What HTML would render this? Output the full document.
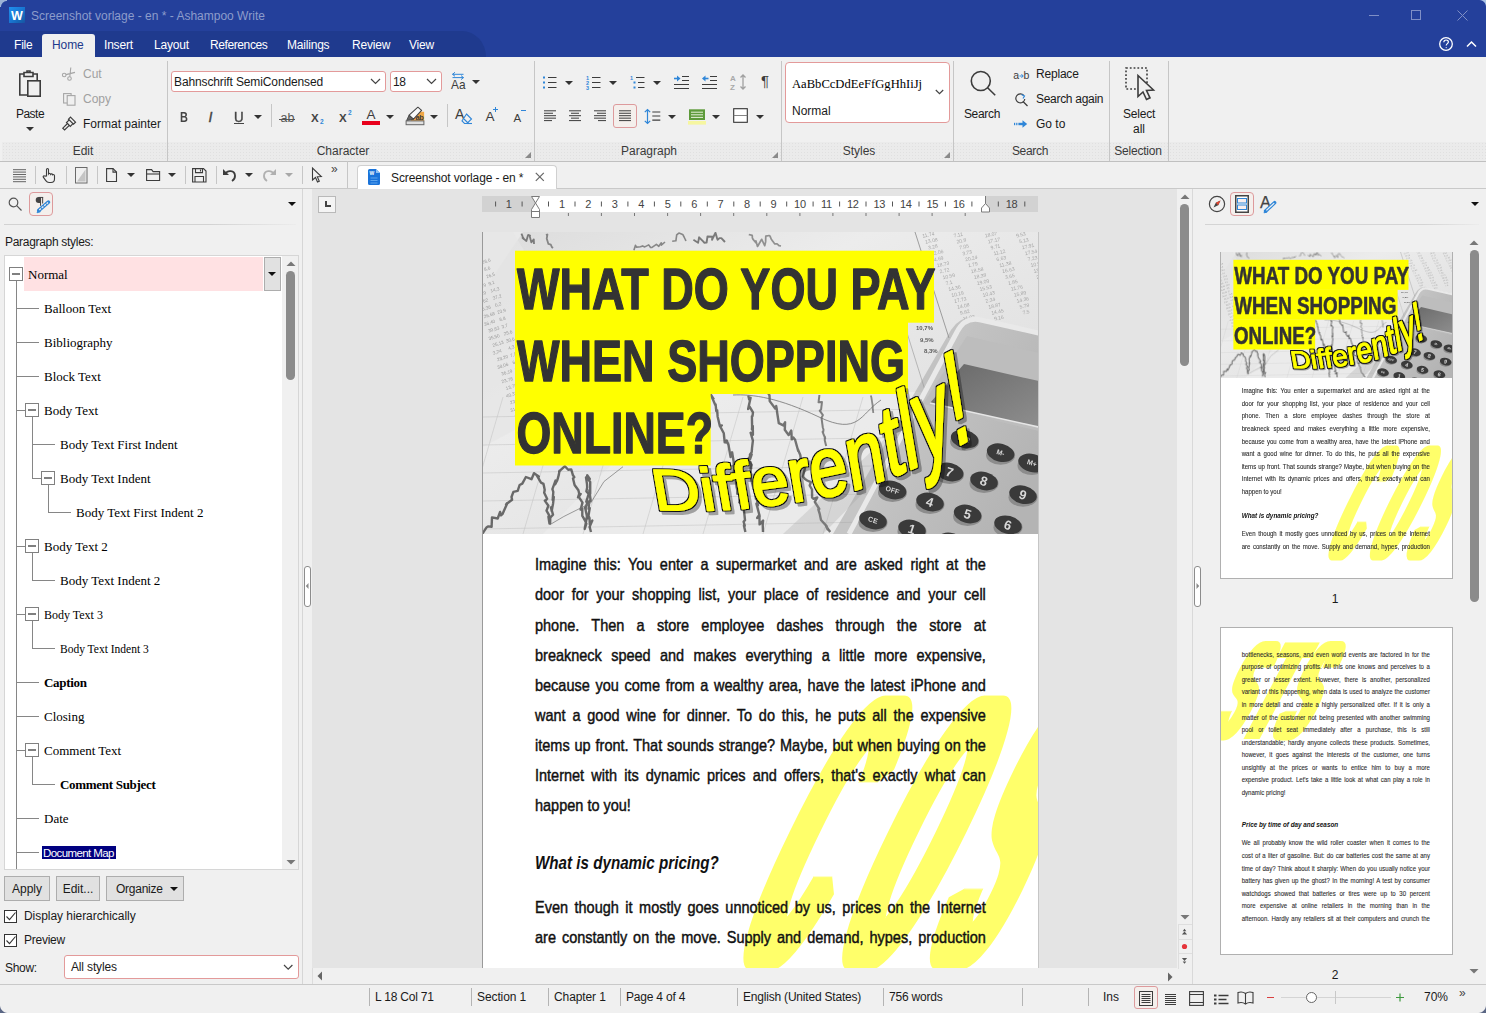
<!DOCTYPE html>
<html lang="en"><head><meta charset="utf-8"><title>Screenshot vorlage - en * - Ashampoo Write</title>
<style>
*{box-sizing:border-box;margin:0;padding:0}
html,body{width:1486px;height:1013px;overflow:hidden;background:#f0f0f0}
body{position:relative;font-family:"Liberation Sans",sans-serif;font-size:12px;color:#1a1a1a;line-height:1}
.a{position:absolute}
.t{position:absolute;white-space:pre;line-height:14px;height:14px}
.c{transform:translateX(-50%)}
svg{position:absolute;overflow:visible}
.sep{position:absolute;width:1px;background:#c6c6c6}
.gl{position:absolute;top:144px;height:14px;line-height:14px;color:#3a3a3a;white-space:pre;transform:translateX(-50%)}
.gray{color:#a0a0a0}
.arr{position:absolute;width:0;height:0;border-left:4px solid transparent;border-right:4px solid transparent;border-top:4px solid #333}
.serif{font-family:"Liberation Serif",serif}
.pinkbox{position:absolute;border:1px solid #dd9a9c;border-radius:3px;background:#f4efec}
.combo{position:absolute;border:1px solid #e39a9a;border-radius:3px;background:#fff}
.tr{position:absolute;white-space:pre;font-family:"Liberation Serif",serif;font-size:13px;line-height:16px;height:16px;color:#000}
.exp{position:absolute;width:14px;height:14px;border:1px solid #808080;background:#fff}
.exp:after{content:"";position:absolute;left:2px;top:5px;width:8px;height:2px;background:#808080}
.hl{position:absolute;height:1px;background:#868686}
.vl{position:absolute;width:1px;background:#868686}
.btn{position:absolute;height:25px;border:1px solid #adadad;background:#e1e1e1;line-height:24px;text-align:center;white-space:pre}
.sb{position:absolute;top:990px;line-height:14px;white-space:pre;color:#1a1a1a}
.ssep{position:absolute;top:988px;width:1px;height:18px;background:#b4b4b4}
</style></head><body>

<!-- TITLE BAR + MENU -->
<div class="a" style="left:0;top:0;width:1486px;height:57px;background:#24409b"></div>
<div class="a" style="left:0;top:31px;width:486px;height:26px;background:#1f3a8e;border-top-right-radius:24px 26px"></div>
<div class="a" style="left:9px;top:7px;width:16px;height:16px;background:linear-gradient(135deg,#2190ee 0%,#1976d2 50%,#1560ae 85%,#1c4fa2 100%)"></div>
<div class="a" style="left:7px;top:6px;width:4px;height:18px;background:#3f8fe6;opacity:.0"></div>
<div class="t" style="left:9px;top:7.5px;width:16px;text-align:center;color:#fff;font-weight:bold;font-size:12.5px;line-height:16px;height:16px">W</div>
<div class="t" style="left:31px;top:9px;color:#8c9ccb;font-size:12px">Screenshot vorlage - en * - Ashampoo Write</div>
<svg style="left:1360px;top:0" width="126" height="32" viewBox="0 0 126 32" fill="none" stroke="#7f8fc6" stroke-width="1">
<path d="M9 15.5h10"/><rect x="51.5" y="10.5" width="9" height="9"/><path d="M97.5 10.5l10 10M107.5 10.5l-10 10"/></svg>
<div class="a" style="left:42px;top:34px;width:53px;height:23px;background:#f0f0f0;border-radius:3px 3px 0 0"></div>
<div class="t" style="left:14px;top:38px;color:#fff;letter-spacing:-.2px">File</div>
<div class="t" style="left:52px;top:38px;color:#1e3a8c;letter-spacing:-.1px">Home</div>
<div class="t" style="left:104px;top:38px;color:#fff;letter-spacing:-.2px">Insert</div>
<div class="t" style="left:154px;top:38px;color:#fff;letter-spacing:-.2px">Layout</div>
<div class="t" style="left:210px;top:38px;color:#fff;letter-spacing:-.4px">References</div>
<div class="t" style="left:287px;top:38px;color:#fff;letter-spacing:-.2px">Mailings</div>
<div class="t" style="left:352px;top:38px;color:#fff;letter-spacing:-.2px">Review</div>
<div class="t" style="left:409px;top:38px;color:#fff;letter-spacing:-.2px">View</div>
<svg style="left:1438px;top:36px" width="44" height="16" viewBox="0 0 44 16" fill="none" stroke="#fff" stroke-width="1.3">
<circle cx="8" cy="8" r="6.3"/><path d="M5.8 6.3c0-3 4.6-3 4.6-.3 0 1.6-2.2 1.7-2.2 3.5" stroke-width="1.2"/><circle cx="8.2" cy="11.6" r=".6" fill="#fff" stroke="none"/>
<path d="M29 10.5l4.5-4.5 4.5 4.5" stroke-width="1.5"/></svg>

<!-- RIBBON -->
<div class="a" style="left:0;top:57px;width:1486px;height:104px;background:#f0f0f0"></div>
<div class="a" style="left:2px;top:142px;width:1484px;height:19px;background:#ebebeb;background-image:radial-gradient(#e0e0e0 0.6px,transparent 0.7px);background-size:3px 3px"></div>
<div class="a" style="left:0;top:161px;width:1486px;height:1px;background:#c0c0c0"></div>
<div class="sep" style="left:167px;top:61px;height:100px"></div>
<div class="sep" style="left:534px;top:61px;height:100px"></div>
<div class="sep" style="left:781px;top:61px;height:100px"></div>
<div class="sep" style="left:953px;top:61px;height:100px"></div>
<div class="sep" style="left:1109px;top:61px;height:100px"></div>
<div class="sep" style="left:1168px;top:61px;height:100px"></div>
<div class="gl" style="left:83px">Edit</div>
<div class="gl" style="left:343px">Character</div>
<div class="gl" style="left:649px">Paragraph</div>
<div class="gl" style="left:859px">Styles</div>
<div class="gl" style="left:1030px;letter-spacing:-.3px">Search</div>
<div class="gl" style="left:1138px;letter-spacing:-.2px">Selection</div>
<svg style="left:524px;top:151px" width="8" height="8"><path d="M7 1v6H1z" fill="#8a8a8a"/></svg>
<svg style="left:771px;top:151px" width="8" height="8"><path d="M7 1v6H1z" fill="#8a8a8a"/></svg>
<svg style="left:943px;top:151px" width="8" height="8"><path d="M7 1v6H1z" fill="#8a8a8a"/></svg>

<!-- Edit group -->
<svg style="left:17px;top:69px" width="26" height="30" viewBox="0 0 26 30" fill="none" stroke="#3c3c3c" stroke-width="1.6">
<path d="M7 5H2.8v21H10"/><path d="M16 5h4.2v6"/><path d="M7 3.5h9v4H7z" fill="#f0f0f0"/><path d="M10 3.5V2h3v1.5"/><rect x="10.8" y="11.8" width="12.4" height="15.4" fill="#f0f0f0"/></svg>
<div class="t c" style="left:30px;top:107px;letter-spacing:-.5px">Paste</div>
<div class="arr" style="left:26px;top:127px;border-top-color:#333"></div>
<svg style="left:61px;top:66px" width="16" height="16" viewBox="0 0 16 16" fill="none" stroke="#a6a6a6" stroke-width="1.1">
<circle cx="3.2" cy="9" r="1.8"/><circle cx="8.5" cy="12.5" r="1.8"/><path d="M5 8.6l9-2.2M8.8 10.7L9.8 1.5"/></svg>
<div class="t gray" style="left:83px;top:67px">Cut</div>
<svg style="left:63px;top:92.5px" width="13" height="13" viewBox="0 0 13 13" fill="#f0f0f0" stroke="#a6a6a6" stroke-width="1.1"><rect x=".6" y=".6" width="7.5" height="9.4"/><rect x="4.2" y="2.6" width="7.8" height="9.6"/></svg>
<div class="t gray" style="left:83px;top:92px">Copy</div>
<svg style="left:61px;top:115px" width="17" height="17" viewBox="0 0 17 17" fill="none" stroke="#3c3c3c" stroke-width="1.2">
<path d="M9.5 2.2l5 5-2 2-5-5z"/><path d="M8.2 4.8L5.5 7.5l3.8 3.8 2.7-2.7"/><path d="M6.5 8.5L1.8 13.2l1.8 1.8 4.7-4.7"/></svg>
<div class="t" style="left:83px;top:117px">Format painter</div>

<!-- Character group -->
<div class="combo" style="left:171px;top:71px;width:215px;height:21px"></div>
<div class="t" style="left:174px;top:75px;letter-spacing:-.12px">Bahnschrift SemiCondensed</div>
<svg style="left:370px;top:78px" width="12" height="8" fill="none" stroke="#444" stroke-width="1.2"><path d="M1 1l4.5 4.5L10 1"/></svg>
<div class="combo" style="left:390px;top:71px;width:52px;height:21px"></div>
<div class="t" style="left:393px;top:75px;letter-spacing:-.5px">18</div>
<svg style="left:426px;top:78px" width="12" height="8" fill="none" stroke="#444" stroke-width="1.2"><path d="M1 1l4.5 4.5L10 1"/></svg>
<svg style="left:450px;top:70px" width="20" height="24" viewBox="0 0 20 24" fill="none">
<path d="M2.5 4.3h11M2.5 4.3l2.5-2M2.5 4.3l2.5 2M13.5 7.6h-11M13.5 7.6l-2.5-2M13.5 7.6l-2.5 2" stroke="#2f86d8" stroke-width="1"/>
<text x="1" y="19" textLength="14.5" lengthAdjust="spacingAndGlyphs" font-family="Liberation Sans,sans-serif" font-size="12.8" fill="#3c3c3c" stroke="none">Aa</text></svg>
<div class="arr" style="left:472px;top:80px;border-top-color:#333"></div>
<div class="t" style="left:179.5px;top:109.3px;font-weight:bold;font-size:14px;color:#444;line-height:16px;height:16px;transform:scaleX(.78);transform-origin:0 0">B</div>
<div class="t" style="left:208.5px;top:109.3px;font-style:italic;font-size:14px;color:#444;line-height:16px;height:16px;-webkit-text-stroke:.4px #444">I</div>
<div class="t" style="left:234px;top:109.3px;font-size:14px;color:#444;line-height:16px;height:16px;-webkit-text-stroke:.4px #444;transform:scaleX(.95);transform-origin:0 0">U</div>
<div class="a" style="left:234px;top:123px;width:10px;height:1px;background:#444"></div>
<div class="arr" style="left:254px;top:115px;border-top-color:#333"></div>
<div class="sep" style="left:271px;top:104px;height:23px"></div>
<div class="t" style="left:280.5px;top:110.5px;font-size:12.5px;color:#555">ab</div><div class="a" style="left:279px;top:118.5px;width:16px;height:1px;background:#555"></div>
<div class="t" style="left:311px;top:110.2px;font-size:11.5px;color:#444;line-height:16px;height:16px;font-weight:bold">X</div>
<div class="t" style="left:320px;top:117.5px;font-size:6.5px;color:#2f86d8;line-height:8px;height:8px;font-weight:bold">2</div>
<div class="t" style="left:339px;top:110px;font-size:11.5px;color:#444;line-height:16px;height:16px;font-weight:bold">X</div>
<div class="t" style="left:348px;top:108.5px;font-size:6.5px;color:#2f86d8;line-height:8px;height:8px;font-weight:bold">2</div>
<div class="t" style="left:366.5px;top:106.5px;font-size:13.5px;color:#3c3c3c;line-height:16px;height:16px">A</div>
<div class="a" style="left:362px;top:121px;width:18px;height:4px;background:#e8001c"></div>
<div class="arr" style="left:386px;top:115px;border-top-color:#333"></div>
<svg style="left:405px;top:105px" width="20" height="22" viewBox="0 0 20 22" fill="none">
<path d="M9.5 6.8h9.6v9.2H5.5z" fill="#f0a646"/>
<text x="10.4" y="15.4" font-family="Liberation Sans,sans-serif" font-size="7.5" fill="#3a3a3a" font-weight="bold" letter-spacing="-.3">ab</text>
<path d="M4.1 10.1L8.5 14.2 1.6 15.6z" fill="#666" stroke="#444" stroke-width=".9" stroke-linejoin="round"/>
<path d="M12.9 2.2L16.6 5.4 8.5 14.2 4.1 10.1z" fill="#fafafa" stroke="#444" stroke-width="1.1" stroke-linejoin="round"/>
<rect x="1.1" y="15.9" width="17.8" height="3.8" fill="#e0e0e0" stroke="#666" stroke-width="1"/></svg>
<div class="arr" style="left:430px;top:115px;border-top-color:#333"></div>
<div class="sep" style="left:447px;top:104px;height:23px"></div>
<div class="t" style="left:455px;top:106px;font-size:14px;color:#3c3c3c;line-height:16px;height:16px">A</div>
<svg style="left:460px;top:112px" width="14" height="14" viewBox="0 0 14 14" fill="#f0f0f0" stroke="#2f86d8" stroke-width="1.1"><path d="M6.5 2l5 5-4.5 4.5H4.5L2 9z"/><path d="M4 7l4.5 4.5" /><path d="M7 11.5h5"/></svg>
<div class="t" style="left:485.5px;top:109px;font-size:13.5px;color:#3c3c3c;line-height:16px;height:16px">A</div>
<svg style="left:493px;top:107px" width="6" height="6" stroke="#2f86d8" stroke-width="1"><path d="M0 2.5h5M2.5 0v5"/></svg>
<div class="t" style="left:513.5px;top:110px;font-size:11.5px;color:#3c3c3c;line-height:16px;height:16px">A</div>
<svg style="left:521px;top:107px" width="6" height="6" stroke="#2f86d8" stroke-width="1"><path d="M0 3.5h5"/></svg>

<!-- Paragraph group row 1 -->
<svg style="left:543px;top:75.7px" width="14" height="14" stroke-width="1.2"><path d="M5 1.5h8.5M5 6.5h8.5M5 11.5h8.5" stroke="#3c3c3c"/><path d="M0 1.5h2M0 6.5h2M0 11.5h2" stroke="#2f86d8" stroke-width="1.8"/></svg>
<div class="arr" style="left:565px;top:81px;border-top-color:#333"></div>
<svg style="left:586px;top:73.7px" width="16" height="18" stroke-width="1.2"><path d="M6 3.5h8.5M6 8.5h8.5M6 13.5h8.5" stroke="#3c3c3c"/>
<text x="0" y="5.5" font-size="5.5" font-weight="bold" font-family="Liberation Sans,sans-serif" fill="#2f86d8">1</text><text x="0" y="10.5" font-size="5.5" font-weight="bold" font-family="Liberation Sans,sans-serif" fill="#2f86d8">2</text><text x="0" y="15.5" font-size="5.5" font-weight="bold" font-family="Liberation Sans,sans-serif" fill="#2f86d8">3</text></svg>
<div class="arr" style="left:609px;top:81px;border-top-color:#333"></div>
<svg style="left:630px;top:73.7px" width="16" height="18" stroke-width="1.2"><path d="M6 3.5h8.5M8 8.5h6.5M8 13.5h6.5" stroke="#3c3c3c"/>
<text x="0" y="5.5" font-size="5.5" font-weight="bold" font-family="Liberation Sans,sans-serif" fill="#2f86d8">1</text><path d="M3.5 8.5h2M3.5 13.5h2" stroke="#2f86d8" stroke-width="1.8"/></svg>
<div class="arr" style="left:653px;top:81px;border-top-color:#333"></div>
<svg style="left:674px;top:74px" width="16" height="17" stroke="#3c3c3c" stroke-width="1.2"><path d="M8 2.5h7M8 6.5h7M0 10.5h15M0 14.5h15"/><path d="M0 4.5h4" stroke="#2f86d8" stroke-width="1.6" fill="none"/><path d="M3 1.5l3.5 3-3.5 3z" fill="#2f86d8" stroke="none"/></svg>
<svg style="left:702px;top:74px" width="16" height="17" stroke="#3c3c3c" stroke-width="1.2"><path d="M8 2.5h7M8 6.5h7M0 10.5h15M0 14.5h15"/><path d="M2.5 4.5h4" stroke="#2f86d8" stroke-width="1.6" fill="none"/><path d="M3.5 1.5L0 4.5l3.5 3z" fill="#2f86d8" stroke="none"/></svg>
<svg style="left:730px;top:73px" width="18" height="18" fill="none" stroke="#a0a0a0" stroke-width="1.3"><path d="M13 2v14M10.5 4.5L13 2l2.5 2.5M10.5 13.5L13 16l2.5-2.5"/>
<text x="0" y="8" font-size="8" font-weight="bold" font-family="Liberation Sans,sans-serif" fill="#a8a8a8" stroke="none">A</text><text x="0" y="17" font-size="8" font-weight="bold" font-family="Liberation Sans,sans-serif" fill="#a8a8a8" stroke="none">Z</text></svg>
<div class="t" style="left:761px;top:73px;font-size:15px;color:#3c3c3c;line-height:16px;height:16px">¶</div>
<!-- row 2 -->
<div class="pinkbox" style="left:613px;top:104px;width:24px;height:24px"></div>
<svg style="left:544px;top:110px" width="14" height="14" stroke="#3c3c3c" stroke-width="1"><path d="M0 0.8h12"/><path d="M0 3.25h9"/><path d="M0 5.7h12"/><path d="M0 8.15h12"/><path d="M0 10.6h8"/></svg><svg style="left:569px;top:110px" width="14" height="14" stroke="#3c3c3c" stroke-width="1"><path d="M0 0.8h12"/><path d="M2 3.25h8"/><path d="M0 5.7h12"/><path d="M2 8.15h8"/><path d="M0 10.6h12"/></svg><svg style="left:594px;top:110px" width="14" height="14" stroke="#3c3c3c" stroke-width="1"><path d="M0 0.8h12"/><path d="M3 3.25h9"/><path d="M0 5.7h12"/><path d="M0 8.15h12"/><path d="M4 10.6h8"/></svg><svg style="left:619.3px;top:110px" width="14" height="14" stroke="#3c3c3c" stroke-width="1"><path d="M0 0.8h12"/><path d="M0 3.25h12"/><path d="M0 5.7h12"/><path d="M0 8.15h12"/><path d="M0 10.6h12"/></svg>
<svg style="left:644px;top:108px" width="18" height="17" fill="none" stroke-width="1.2"><path d="M3.5 1.5v14M.8 4.2L3.5 1.5l2.7 2.7M.8 12.8l2.7 2.7 2.7-2.7" stroke="#2f86d8"/><path d="M8.3 4h8M8.3 8h8M8.3 12.2h8" stroke="#3c3c3c"/></svg>
<div class="arr" style="left:668px;top:115px;border-top-color:#333"></div>
<svg style="left:688px;top:109px" width="18" height="20"><rect x="0" y="12" width="18" height="3.6" fill="#f6f6a0"/><rect x="1" y=".3" width="16" height="10.7" fill="#5d9a3a"/><path d="M3 3.2h12M3 5.8h12M3 8.4h12" stroke="#e6f0da" stroke-width="1"/></svg>
<div class="arr" style="left:712px;top:115px;border-top-color:#333"></div>
<svg style="left:733px;top:108px" width="16" height="16" fill="#fff" stroke="#333" stroke-width="1.1"><rect x=".7" y=".7" width="13.6" height="13.6"/><path d="M.7 7.5h13.6" stroke="#777" stroke-width=".9"/></svg>
<div class="arr" style="left:756px;top:115px;border-top-color:#333"></div>

<!-- Styles -->
<div class="combo" style="left:785px;top:62px;width:165px;height:61px;border-radius:4px"></div>
<div class="t serif" style="left:792px;top:76px;font-size:12.6px;line-height:16px;height:16px;color:#000">AaBbCcDdEeFfGgHhIiJj</div>
<div class="t" style="left:792px;top:104px">Normal</div>
<svg style="left:935px;top:89px" width="10" height="7" fill="none" stroke="#444" stroke-width="1.2"><path d="M.8 1l3.7 3.7L8.2 1"/></svg>

<!-- Search -->
<svg style="left:969px;top:68px" width="28" height="28" fill="none" stroke="#3c3c3c" stroke-width="1.6"><circle cx="11.8" cy="13" r="9.5"/><path d="M18.6 19.8l7.6 7.4"/></svg>
<div class="t c" style="left:982px;top:107px;letter-spacing:-.3px">Search</div>
<div class="t" style="left:1013.3px;top:68px;font-size:10.5px;color:#3c3c3c">a</div><div class="t" style="left:1023.6px;top:68px;font-size:10.5px;color:#3c3c3c">b</div>
<svg style="left:1019px;top:72.5px" width="6" height="6" fill="none" stroke="#2f86d8" stroke-width="1"><path d="M.5 3h3.5M2.5 1.2L4.3 3 2.5 4.8"/></svg>
<div class="t" style="left:1036px;top:67px;letter-spacing:-.2px">Replace</div>
<svg style="left:1014px;top:92px" width="15" height="15" fill="none" stroke="#3c3c3c" stroke-width="1.2"><path d="M9.8 3.5A4.5 4.5 0 1 0 10.8 7"/><path d="M9 9.5l4.5 4.5"/><path d="M7.5 2.5l3 1.5-1.5 2.5" stroke="#2f86d8"/></svg>
<div class="t" style="left:1036px;top:92px;letter-spacing:-.3px">Search again</div>
<svg style="left:1014px;top:119px" width="16" height="10" fill="#2f86d8"><rect x="0" y="3.8" width="1.2" height="2.4"/><rect x="2.2" y="3.8" width="1.2" height="2.4"/><rect x="4.4" y="3.8" width="5" height="2.4"/><path d="M8.5 1.2L13.2 5 8.5 8.8z"/></svg>
<div class="t" style="left:1036px;top:117px">Go to</div>

<!-- Selection -->
<svg style="left:1125px;top:67px" width="30" height="34" fill="none"><path d="M1 1h21v21H1z" stroke="#3c3c3c" stroke-width="1.6" stroke-dasharray="1.8 2"/><path d="M13 8.5v21l5-4.5 3.5 7.5 3.5-1.7-3.5-7.3 7-.5z" fill="#f0f0f0" stroke="#3c3c3c" stroke-width="1.6" stroke-linejoin="miter"/></svg>
<div class="t c" style="left:1139px;top:107px;letter-spacing:-.2px">Select</div>
<div class="t c" style="left:1139px;top:122px">all</div>

<!-- TOOLBAR ROW -->
<div class="a" style="left:0;top:162px;width:1486px;height:26px;background:#f0f0f0"></div>
<div class="a" style="left:0;top:188px;width:1486px;height:1px;background:#c9c9c9"></div>
<svg style="left:12.5px;top:169px" width="14" height="14" stroke="#555" stroke-width=".9"><path d="M0 .7h13M0 3.1h13M0 5.5h13M0 7.9h13M0 10.3h13M0 12.7h13"/></svg>
<div class="sep" style="left:35px;top:166px;height:18px"></div>
<svg style="left:42px;top:167px" width="15" height="17" fill="#f0f0f0" stroke="#3c3c3c" stroke-width="1.1"><path d="M4.5 9V2.5c0-1.3 2-1.3 2 0V7c.6-.9 2-.7 2.1.3.6-.7 1.9-.5 2 .5.7-.5 1.9-.2 1.9.9v3.3c0 2.5-1.3 3.5-3.5 3.5H7c-1.5 0-2.3-.6-3.2-1.9L1.3 10.2c-.6-1 .7-2 1.6-1.1z"/></svg>
<div class="sep" style="left:66px;top:166px;height:18px"></div>
<svg style="left:75px;top:167px" width="13" height="17" fill="none" stroke="#6a6a6a" stroke-width="1"><rect x=".5" y=".5" width="11.5" height="15.5"/><path d="M10.5 2.5v12h-8.5z" fill="#c4c4c4" stroke="none"/></svg>
<div class="sep" style="left:97px;top:166px;height:18px"></div>
<svg style="left:106px;top:168px" width="12" height="15" fill="none" stroke="#3c3c3c" stroke-width="1.1"><path d="M.6.6h6.4l3.5 3.5v9.4H.6z"/><path d="M7 .6v3.5h3.5"/></svg>
<div class="arr" style="left:127px;top:173px;border-top-color:#333"></div>
<svg style="left:146px;top:169px" width="15" height="13" fill="none" stroke="#3c3c3c" stroke-width="1.1"><path d="M.6 11.5V.6h5l1.5 2h6.5v8.9z"/><path d="M.6 5h13"/></svg>
<div class="arr" style="left:168px;top:173px;border-top-color:#333"></div>
<div class="sep" style="left:185px;top:166px;height:18px"></div>
<svg style="left:192px;top:168px" width="15" height="15" fill="none" stroke="#3c3c3c" stroke-width="1.1"><path d="M.6.6h10.9l2.5 2.5v10.9H.6z"/><path d="M3.5.6v4h7V.6M8.5 1.5v2M3 14V8.5h8.5V14"/></svg>
<div class="sep" style="left:216px;top:166px;height:18px"></div>
<svg style="left:222px;top:168px" width="15" height="14" fill="none" stroke="#3c3c3c" stroke-width="1.8"><path d="M3.5 5.5c2-3.5 9-3.5 9.5 2 .3 3-1.5 4.5-3 5.5"/><path d="M1 1v6h6z" fill="#3c3c3c" stroke="none"/></svg>
<div class="arr" style="left:245px;top:173px;border-top-color:#333"></div>
<svg style="left:262px;top:168px" width="15" height="14" fill="none" stroke="#b0b0b0" stroke-width="1.8"><path d="M11.5 5.5c-2-3.5-9-3.5-9.5 2-.3 3 1.5 4.5 3 5.5"/><path d="M14 1v6H8z" fill="#b0b0b0" stroke="none"/></svg>
<div class="arr" style="left:285px;top:173px;border-top-color:#a8a8a8"></div>
<div class="sep" style="left:302px;top:166px;height:18px"></div>
<svg style="left:311px;top:167px" width="12" height="16" fill="none" stroke="#3c3c3c" stroke-width="1.1"><path d="M1.5 1v12l3-2.5 2 4.5 1.8-.8-2-4.5 4-.2z"/></svg>
<div class="t" style="left:331px;top:162px;font-size:12px;color:#444">»</div>
<div class="sep" style="left:347px;top:161px;height:27px"></div>
<!-- doc tab -->
<div class="a" style="left:357px;top:165px;width:200px;height:24px;background:#fff;border:1px solid #d0d0d0;border-bottom:none;border-radius:4px 4px 0 0"></div>
<svg style="left:368px;top:169px" width="12" height="16"><path d="M1.5 0h6.5l4 4v10.5a1.5 1.5 0 0 1-1.5 1.5h-9A1.5 1.5 0 0 1 0 14.5v-13A1.5 1.5 0 0 1 1.5 0z" fill="#1a73d9"/><path d="M8 0v4h4z" fill="#8cc0f5"/><path d="M2.5 9h7M2.5 11.5h7M2.5 14h7" stroke="#5fa6ee" stroke-width="1"/><text x="1.5" y="5.8" font-family="Liberation Sans,sans-serif" font-size="5" font-weight="bold" fill="#fff">W</text></svg>
<div class="t" style="left:391px;top:171px;letter-spacing:-.12px">Screenshot vorlage - en *</div>
<svg style="left:535px;top:172px" width="10" height="10" stroke="#666" stroke-width="1.2"><path d="M.8.8l8 8M8.8.8l-8 8"/></svg>

<!-- LEFT PANEL -->
<div class="a" style="left:0;top:189px;width:303px;height:796px;background:#f0f0f0"></div>
<svg style="left:8px;top:197px" width="15" height="15" fill="none" stroke="#555" stroke-width="1.2"><circle cx="5.5" cy="5.5" r="4.3"/><path d="M8.7 8.7l4.8 4.8"/></svg>
<div class="pinkbox" style="left:29px;top:192px;width:24px;height:24px;border-radius:4px"></div>
<svg style="left:29px;top:192px" width="24" height="24" fill="none"><path d="M11.9 5H9.7a3 3 0 0 0 0 6h2.2z" fill="#444"/><path d="M9.7 5.45h4.4M11.55 5v8.8M13.65 5v6.5" stroke="#444" stroke-width="1"/><path d="M9.8 18.3L19.4 10.2" stroke="#2f86d8" stroke-width="3.7" stroke-linecap="round"/><path d="M8 20.8l1.2-3.3 2.2 2.3z" fill="#2f86d8" stroke="#2f86d8" stroke-width=".8" stroke-linejoin="round"/><path d="M10.3 17.9L19 10.5" stroke="#f4efec" stroke-width="1.3" stroke-dasharray="2.2 1"/></svg>
<div class="arr" style="left:288px;top:202px;border-top-color:#111"></div>
<div class="a" style="left:4px;top:224px;width:292px;height:1px;background:linear-gradient(90deg,#d2d2d2 70%,#ececec)"></div>
<div class="t" style="left:5px;top:235px;letter-spacing:-.3px">Paragraph styles:</div>
<div class="a" style="left:4px;top:255px;width:295px;height:615px;background:#fff;border:1px solid #d6d6d6"></div>
<div class="a" style="left:282px;top:256px;width:16px;height:613px;background:#f0f0f0"></div>
<div class="a" style="left:24px;top:257px;width:239px;height:34px;background:#ffe1e3"></div>
<div class="a" style="left:264px;top:257px;width:17px;height:34px;background:#e1e1e1;border:1px solid #adadad"></div>
<div class="arr" style="left:268px;top:272px;border-top-color:#111"></div>
<svg style="left:286px;top:261px" width="10" height="6"><path d="M5 .5l4.5 4.5h-9z" fill="#777"/></svg>
<div class="a" style="left:286px;top:271px;width:9px;height:109px;background:#8b8b8b;border-radius:4.5px"></div>
<svg style="left:286px;top:859px" width="10" height="6"><path d="M5 5.5L.5 1h9z" fill="#777"/></svg>
<div class="vl" style="left:16px;top:281px;height:588px"></div><div class="vl" style="left:32px;top:416px;height:63px"></div><div class="vl" style="left:48px;top:484px;height:29px"></div><div class="vl" style="left:32px;top:552px;height:29px"></div><div class="vl" style="left:32px;top:620px;height:29px"></div><div class="vl" style="left:32px;top:756px;height:29px"></div><div class="exp" style="left:9px;top:267px"></div><div class="tr" style="left:28px;top:266.5px;font-size:13px">Normal</div><div class="hl" style="left:16px;top:308px;width:23px"></div><div class="tr" style="left:44px;top:300.5px;font-size:13px">Balloon Text</div><div class="hl" style="left:16px;top:342px;width:23px"></div><div class="tr" style="left:44px;top:334.5px;font-size:13px">Bibliography</div><div class="hl" style="left:16px;top:376px;width:23px"></div><div class="tr" style="left:44px;top:368.5px;font-size:13px">Block Text</div><div class="hl" style="left:16px;top:410px;width:12px"></div><div class="exp" style="left:25px;top:403px"></div><div class="tr" style="left:44px;top:402.5px;font-size:13px">Body Text</div><div class="hl" style="left:32px;top:444px;width:23px"></div><div class="tr" style="left:60px;top:436.5px;font-size:13px">Body Text First Indent</div><div class="hl" style="left:32px;top:478px;width:12px"></div><div class="exp" style="left:41px;top:471px"></div><div class="tr" style="left:60px;top:470.5px;font-size:13px">Body Text Indent</div><div class="hl" style="left:48px;top:512px;width:23px"></div><div class="tr" style="left:76px;top:504.5px;font-size:13px">Body Text First Indent 2</div><div class="hl" style="left:16px;top:546px;width:12px"></div><div class="exp" style="left:25px;top:539px"></div><div class="tr" style="left:44px;top:538.5px;font-size:13px">Body Text 2</div><div class="hl" style="left:32px;top:580px;width:23px"></div><div class="tr" style="left:60px;top:572.5px;font-size:13px">Body Text Indent 2</div><div class="hl" style="left:16px;top:614px;width:12px"></div><div class="exp" style="left:25px;top:607px"></div><div class="tr" style="left:44px;top:606.5px;font-size:12px">Body Text 3</div><div class="hl" style="left:32px;top:648px;width:23px"></div><div class="tr" style="left:60px;top:640.5px;font-size:11.5px">Body Text Indent 3</div><div class="hl" style="left:16px;top:682px;width:23px"></div><div class="tr" style="left:44px;top:674.5px;font-size:13px;font-weight:bold;letter-spacing:-.3px">Caption</div><div class="hl" style="left:16px;top:716px;width:23px"></div><div class="tr" style="left:44px;top:708.5px;font-size:13px">Closing</div><div class="hl" style="left:16px;top:750px;width:12px"></div><div class="exp" style="left:25px;top:743px"></div><div class="tr" style="left:44px;top:742.5px;font-size:13px">Comment Text</div><div class="hl" style="left:32px;top:784px;width:23px"></div><div class="tr" style="left:60px;top:776.5px;font-size:13px;font-weight:bold;letter-spacing:-.3px">Comment Subject</div><div class="hl" style="left:16px;top:818px;width:23px"></div><div class="tr" style="left:44px;top:810.5px;font-size:13px">Date</div><div class="hl" style="left:16px;top:852px;width:23px"></div><div class="a" style="left:42px;top:846px;width:74px;height:13px;background:#000080"></div><div class="t" style="left:43px;top:845.5px;color:#fff;font-size:11.5px;letter-spacing:-.6px">Document Map</div>
<div class="btn" style="left:4px;top:876px;width:46px">Apply</div>
<div class="btn" style="left:56px;top:876px;width:44px">Edit...</div>
<div class="btn" style="left:106px;top:876px;width:78px;text-align:left;padding-left:9px;letter-spacing:-.25px">Organize</div>
<div class="arr" style="left:170px;top:887px;border-top-color:#111"></div>
<div class="a" style="left:4px;top:910px;width:13px;height:13px;background:#fff;border:1px solid #333"></div>
<svg style="left:5px;top:911px" width="12" height="11" fill="none" stroke="#333" stroke-width="1.1"><path d="M1.5 5.5l3 3.2L10.5 1.5"/></svg>
<div class="t" style="left:24px;top:909px;letter-spacing:-.05px">Display hierarchically</div>
<div class="a" style="left:4px;top:934px;width:13px;height:13px;background:#fff;border:1px solid #333"></div>
<svg style="left:5px;top:935px" width="12" height="11" fill="none" stroke="#333" stroke-width="1.1"><path d="M1.5 5.5l3 3.2L10.5 1.5"/></svg>
<div class="t" style="left:24px;top:933px;letter-spacing:-.25px">Preview</div>
<div class="t" style="left:5px;top:961px;letter-spacing:-.3px">Show:</div>
<div class="combo" style="left:64px;top:955px;width:235px;height:24px"></div>
<div class="t" style="left:71px;top:960px;letter-spacing:-.15px">All styles</div>
<svg style="left:283px;top:964px" width="11" height="8" fill="none" stroke="#444" stroke-width="1.2"><path d="M1 1l4.2 4.2L9.4 1"/></svg>
<div class="a" style="left:0;top:984px;width:1486px;height:1px;background:#c9c9c9"></div>

<!-- left splitter -->
<div class="a" style="left:302px;top:189px;width:1px;height:795px;background:#d6d6d6"></div>
<div class="a" style="left:303px;top:189px;width:9px;height:795px;background:#f0f0f0"></div>
<div class="a" style="left:304px;top:566px;width:7px;height:41px;background:#fff;border:1px solid #8c8c8c;border-radius:3px"></div>
<svg style="left:305px;top:582px" width="4" height="8"><path d="M3.5 1v6L.8 4z" fill="#888"/></svg>

<!-- DOC AREA -->
<div class="a" style="left:312px;top:189px;width:865px;height:779px;background:#e4e4e4"></div>
<div class="a" style="left:312px;top:968px;width:1px;height:16px;background:#dcdcdc"></div>
<div class="a" style="left:318px;top:195.5px;width:17.5px;height:17px;background:#f4f4f4;border:1px solid #b9b9b9"></div>
<div class="a" style="left:325px;top:201px;width:2px;height:6px;background:#444"></div><div class="a" style="left:325px;top:205px;width:6px;height:2px;background:#444"></div>
<div class="a" style="left:482px;top:196px;width:556px;height:16px;background:#d2d2d2"></div><div class="a" style="left:535px;top:196px;width:451px;height:16px;background:#fff"></div><svg style="left:0;top:0" width="1486" height="230" font-family="Liberation Sans,sans-serif" font-size="11" fill="#444" text-anchor="middle"><text x="508.8" y="208">1</text><text x="561.8" y="208" letter-spacing="-.3">1</text><text x="588.2" y="208" letter-spacing="-.3">2</text><text x="614.7" y="208" letter-spacing="-.3">3</text><text x="641.1" y="208" letter-spacing="-.3">4</text><text x="667.6" y="208" letter-spacing="-.3">5</text><text x="694.1" y="208" letter-spacing="-.3">6</text><text x="720.5" y="208" letter-spacing="-.3">7</text><text x="747" y="208" letter-spacing="-.3">8</text><text x="773.4" y="208" letter-spacing="-.3">9</text><text x="799.9" y="208" letter-spacing="-.3">10</text><text x="826.4" y="208" letter-spacing="-.3">11</text><text x="852.8" y="208" letter-spacing="-.3">12</text><text x="879.3" y="208" letter-spacing="-.3">13</text><text x="905.7" y="208" letter-spacing="-.3">14</text><text x="932.2" y="208" letter-spacing="-.3">15</text><text x="958.7" y="208" letter-spacing="-.3">16</text><text x="1011.6" y="208" letter-spacing="-.3">18</text><path d="M495.6 201.5v5M522.1 201.5v5M548.5 201.5v5M575 201.5v5M601.4 201.5v5M627.9 201.5v5M654.4 201.5v5M680.8 201.5v5M707.3 201.5v5M733.8 201.5v5M760.2 201.5v5M786.7 201.5v5M813.1 201.5v5M839.6 201.5v5M866 201.5v5M892.5 201.5v5M919 201.5v5M945.4 201.5v5M971.9 201.5v5M998.3 201.5v5M1024.8 201.5v5" stroke="#555" stroke-width="1" fill="none"/><path d="M568.4 213v3M601.4 213v3M634.5 213v3M667.6 213v3M700.6 213v3M733.7 213v3M766.8 213v3M799.9 213v3M832.9 213v3M866 213v3M899.1 213v3M932.1 213v3M965.2 213v3" stroke="#777" stroke-width="1" fill="none"/><path d="M531.5 196.5h8l-4 6.5 4 6.5v8h-8v-8l4-6.5z M531.5 211.5h8" fill="#fff" stroke="#7a7a7a" stroke-width="1"/><path d="M985.5 196v8" stroke="#7a7a7a"/><path d="M985.5 203.5l4 4.5v4h-8v-4z" fill="#fff" stroke="#7a7a7a" stroke-width="1"/></svg>
<div class="a" style="left:482px;top:232px;width:557px;height:737px;background:linear-gradient(90deg,#9a9a9a 50%,#c6c6c6 50%)"></div>
<div class="a" style="left:483px;top:232px;width:555px;height:737px;background:#fff;overflow:hidden">
<svg style="left:0;top:0" width="556" height="737" viewBox="0 0 556 737"><defs><clipPath id="wmA"><rect x="0" y="302" width="555" height="440"/></clipPath></defs>
<defs><linearGradient id="pgA" x1="0" y1="0" x2="1" y2="1"><stop offset="0" stop-color="#dcdcdc"/><stop offset=".35" stop-color="#ececec"/><stop offset=".7" stop-color="#e2e2e2"/><stop offset="1" stop-color="#cfcfcf"/></linearGradient><linearGradient id="cgA" x1="0" y1="0" x2="1" y2="0.6"><stop offset="0" stop-color="#d6d6d6"/><stop offset=".5" stop-color="#c2c2c2"/><stop offset="1" stop-color="#b4b4b4"/></linearGradient><linearGradient id="lgA" x1="0" y1="0" x2="1" y2="1"><stop offset="0" stop-color="#676767"/><stop offset="1" stop-color="#8f8f8f"/></linearGradient><clipPath id="pcA"><rect x="0" y="0" width="555.6" height="302"/></clipPath></defs><g clip-path="url(#pcA)"><rect x="0" y="0" width="555.6" height="302" fill="url(#pgA)"/><path d="M0 60L40 0H0z" fill="#e9e9e9"/><path d="M0 215L120 150 30 0H0z" fill="#e6e6e6" opacity=".7"/><path d="M200 160L555 160 555 302 60 302z" fill="#ececec" opacity=".8"/><g font-family="Liberation Sans,sans-serif" font-size="5" fill="#8a8a8a" opacity=".7" transform="rotate(-12 470 50)"><text x="448" y="-6">10.19</text><text x="477" y="-6">12.83</text><text x="506" y="-6">1.09</text><text x="535" y="-6">17.12</text><text x="449.6" y="0.4">11.74</text><text x="478.6" y="0.4">1.64</text><text x="507.6" y="0.4">6.04</text><text x="536.6" y="0.4">2.55</text><text x="451.2" y="6.8">13.08</text><text x="480.2" y="6.8">7.11</text><text x="509.2" y="6.8">17.54</text><text x="538.2" y="6.8">1.72</text><text x="452.8" y="13.2">3.28</text><text x="481.8" y="13.2">20.8</text><text x="510.8" y="13.2">18.07</text><text x="539.8" y="13.2">18.74</text><text x="454.4" y="19.6">12.06</text><text x="483.4" y="19.6">7.05</text><text x="512.4" y="19.6">17.17</text><text x="541.4" y="19.6">9.53</text><text x="456" y="26">4.69</text><text x="485" y="26">3.73</text><text x="514" y="26">9.71</text><text x="543" y="26">5.13</text><text x="457.6" y="32.4">18.73</text><text x="486.6" y="32.4">20.24</text><text x="515.6" y="32.4">11.12</text><text x="544.6" y="32.4">17.91</text><text x="459.2" y="38.8">2.72</text><text x="488.2" y="38.8">1.79</text><text x="517.2" y="38.8">6.63</text><text x="546.2" y="38.8">17.54</text><text x="460.8" y="45.2">10.59</text><text x="489.8" y="45.2">18.58</text><text x="518.8" y="45.2">11.38</text><text x="547.8" y="45.2">7.23</text><text x="462.4" y="51.6">7.1</text><text x="491.4" y="51.6">18.38</text><text x="520.4" y="51.6">16.63</text><text x="549.4" y="51.6">10.93</text><text x="464" y="58">14.36</text><text x="493" y="58">19.09</text><text x="522" y="58">3.65</text><text x="551" y="58">13.21</text><text x="465.6" y="64.4">10.19</text><text x="494.6" y="64.4">15.53</text><text x="523.6" y="64.4">1.85</text><text x="552.6" y="64.4">2.97</text><text x="467.2" y="70.8">17.73</text><text x="496.2" y="70.8">10.43</text><text x="525.2" y="70.8">11.76</text><text x="554.2" y="70.8">15.74</text><text x="468.8" y="77.2">14.08</text><text x="497.8" y="77.2">2.34</text><text x="526.8" y="77.2">15.89</text><text x="555.8" y="77.2">2.07</text><text x="470.4" y="83.6">9.82</text><text x="499.4" y="83.6">18.87</text><text x="528.4" y="83.6">14.36</text><text x="557.4" y="83.6">12.85</text><text x="472" y="90">11.02</text><text x="501" y="90">14.45</text><text x="530" y="90">5.78</text><text x="559" y="90">3.63</text><text x="473.6" y="96.4">1.27</text><text x="502.6" y="96.4">9.16</text><text x="531.6" y="96.4">7.5</text><text x="560.6" y="96.4">12.63</text></g><path d="M432 0L466 106" stroke="#8a8a8a" stroke-width="1" opacity=".8"/><path d="M420 88L452 190" stroke="#9a9a9a" stroke-width=".8" opacity=".8"/><g font-family="Liberation Sans,sans-serif" font-size="6" fill="#444" font-weight="bold" opacity=".85"><text x="433" y="98">10,7%</text><text x="437" y="109.5">9,5%</text><text x="441" y="121">8,3%</text></g><g font-family="Liberation Sans,sans-serif" font-size="4.6" fill="#808080" opacity=".75" transform="rotate(-17 10 60)"><text x="-8" y="30">5,21</text><text x="8" y="30">28,6</text><text x="-6" y="37.5">35,35</text><text x="8" y="37.5">8,6</text><text x="-8" y="45">35,35</text><text x="8" y="45">26,5</text><text x="-6" y="52.5">24,29</text><text x="8" y="52.5">9,1</text><text x="-8" y="60">11,19</text><text x="8" y="60">14,3</text><text x="-6" y="67.5">0,62</text><text x="8" y="67.5">37,2</text><text x="-8" y="75">16,36</text><text x="8" y="75">0,2</text><text x="-6" y="82.5">26,68</text><text x="8" y="82.5">23,9</text><text x="-8" y="90">36,40</text><text x="8" y="90">8,8</text><text x="-6" y="97.5">39,83</text><text x="8" y="97.5">3,7</text><text x="-8" y="105">35,50</text><text x="8" y="105">25,6</text><text x="-6" y="112.5">25,13</text><text x="8" y="112.5">30,6</text><text x="-8" y="120">3,24</text><text x="8" y="120">4,3</text><text x="-6" y="127.5">28,20</text><text x="8" y="127.5">7,5</text><text x="-8" y="135">38,06</text><text x="8" y="135">6,0</text><text x="-6" y="142.5">36,19</text><text x="8" y="142.5">34,1</text><text x="-8" y="150">23,78</text><text x="8" y="150">1,1</text><text x="-6" y="157.5">13,78</text><text x="8" y="157.5">24,2</text><text x="-8" y="165">40,32</text><text x="8" y="165">22,9</text><text x="-6" y="172.5">23,60</text><text x="8" y="172.5">7,1</text><text x="-8" y="180">31,59</text><text x="8" y="180">30,7</text><text x="-6" y="187.5">19,10</text><text x="8" y="187.5">9,1</text></g><g stroke="#bdbdbd" stroke-width=".6" opacity=".8"><path d="M20 165L-20 302"/><path d="M80 165L40 302"/><path d="M140 165L100 302"/><path d="M200 165L160 302"/><path d="M260 165L220 302"/><path d="M320 165L280 302"/><path d="M380 165L340 302"/><path d="M440 165L400 302"/><path d="M0 185L555 175"/><path d="M0 213L555 203"/><path d="M0 241L555 231"/><path d="M0 269L555 259"/><path d="M0 297L555 287"/></g><defs><filter id="blA" x="-5%" y="-5%" width="110%" height="110%"><feGaussianBlur stdDeviation=".55"/></filter></defs><g fill="none" stroke="#383838" stroke-linejoin="round" filter="url(#blA)"><path d="M-1.5 303.1 L3.7 295.2 L5.3 294.4 L8.6 294.8 L9 285.4 L14.7 286.5 L17.1 280 L18 283.4 L19.4 282.2 L24.4 270.9 L23.1 272.3 L29.1 267.8 L28.5 265 L30.4 259.8 L34.7 258.8 L36.6 253 L39.3 251.6 L42.9 245 L48.5 247.2 L51 241.2 L55.8 244.6 L53.9 243.6 L58 250.7 L60.5 251.9 L61.7 257.8 L61.2 260.8 L64.1 266.7 L63.1 268 L61.8 268.6 L65.4 273.7 L63.5 278.6 L66.2 283.3 L65.4 284.8 L66.5 291.5 L67.1 291.6 L67.3 284.8 L65.8 287.2 L70 282.7 L67.9 275.3 L68.7 279 L70.1 271.4 L70.8 265 L69.7 267.9 L70.3 259.9 L69.4 257.1 L72.5 248.6 L72.1 252.4 L74.3 248.3 L75.8 242.9 L76.5 238.7 L76.2 239.3 L81.9 234.2 L85.2 237.7 L88.2 237.4 L90 243.3 L91.3 245.1 L90 246.5 L91.6 253 L95.4 258.3 L96.2 261.8 L95 265.4 L97.7 261.9 L95.8 264.9 L99.5 270.6 L97.6 277.6 L99.3 276.2 L99.3 283.9 L100.1 285.2 L103 290.4 L102.1 294.2 L101.7 297 L103.4 291.6 L102.2 294.3 L103.9 284.5 L104.4 286.4 L102.1 275.5 L102.7 278.2 L102.8 274.5 L105 269.4 L103.3 269.7 L105.7 261.9 L103.4 259.5 L104.2 255.2 L104 252.1 L103 245.4 L106.8 247 L104.2 243.2 L104.4 247.5 L106.3 246.3 L104.5 246.2 L107.2 250 L107.2 261.8 L106.3 258.2 L107.7 269 L107.2 268.3 L106.1 270.4 L105.6 276.9 L106.7 276.1 L105.5 283.8 L106.5 285.9 L106.8 292.8 L109.3 288.6 L106.6 294.9 L108 300" stroke-width="2.4" opacity=".72"/><path d="M230.9 167.5 L227.8 162.6 L232.3 172.9 L232.6 172.3 L233.3 179.1 L234.2 178.3 L234.6 184.4 L236.9 194.2 L238.9 193.4 L238 194.1 L237.5 195 L240.8 201.3 L241.7 210.4 L243.7 210.5 L243.7 208.5 L245.5 213 L247.6 225 L249.1 220.3 L250.7 229.9 L250.7 234.4 L251.5 236.7 L250.3 242.1 L253.7 237.3 L253.5 246.3 L252.8 247.9 L253.6 255.3 L254.3 257.9 L254.3 261.8 L257.4 261.1 L256.5 269.2 L257.9 268.4 L256.2 270.2 L259 272.2 L260.5 276.7 L261.2 280.6 L262 288.1 L260.6 289.7 L261.8 293.9 L260.9 293.6 L262.4 300" stroke-width="2.4" opacity=".7"/><path d="M265.3 163.4 L266.2 167.6 L267.6 165.7 L265.1 177 L266.4 174.5 L270 180.4 L269.5 184 L268.9 184.3 L269.1 195 L268.9 197.3 L269.8 194 L269.9 202.8 L267.6 200.7 L269.9 208.6 L269 216.2 L268.7 220.1 L267 222.4 L267 227.3 L268.7 222.4 L265.1 227.1 L268.6 232.8 L267.7 235 L267.7 239.4 L267.6 245 L269.3 251.8 L270.3 255.6 L271.7 259.8 L271.5 255.2 L272.9 266.8 L273.7 266.4 L273.7 266.2 L275 273.3 L273.4 271.6 L276.7 284.3 L274.1 285.9 L276.4 282.8 L276.6 292.4 L280.1 288.6 L279.7 292 L280 300" stroke-width="2.4" opacity=".7"/><path d="M284.1 159.4 L286.5 163.3 L286.7 169.1 L292.2 176.5 L293.2 174.1 L293.9 178 L294 179.6 L295.8 191.2 L300.3 193.4 L302.1 190.3 L301.8 197.7 L305.6 203.1 L308.2 198.5 L308.8 207.4 L310.3 205.5 L312.1 207.7 L315.2 219 L314.6 216.8 L317.3 223 L318.2 229.3 L317.6 228.4 L319.1 232.1 L318.2 234.4 L322.2 235.2 L319.9 244.6 L322 247.1 L324.2 248.5 L327.9 250.2 L326.7 253.5 L329 257.5 L329.1 265.4 L330.3 266.8 L334.3 265.4 L331.8 269.9 L336.3 277 L335.3 277.4 L336.8 282.2 L338 288 L343.6 294.1 L344.7 297.6 L343.2 294.4 L347.2 300" stroke-width="2.4" opacity=".68"/><path d="M336.4 163 L335.6 170.1 L335.5 170.3 L339 170 L338.1 177.4 L336.7 178.7 L339.4 182.4 L339.9 183.1 L338.5 185.9 L339.8 195.5 L340.5 197.5 L340.1 200.4 L339.6 199.8 L342.2 206.4 L341.8 204.5 L341.8 208.6 L343.2 214" stroke-width="2" opacity=".6"/><path d="M387.8 163.6 L388.4 165.6 L389.5 172.7 L389.6 172.2 L389.8 176.6 L390.3 181" stroke-width="1.8" opacity=".55"/><path d="M38.4 1.7 L39.9 5.1 L40.8 7 L39.5 5.8 L43.4 9 L44.9 3.6 L45.2 2.9 L47.1 3.5 L46.5 3.3 L48.3 10.4 L50.8 7.4 L51 12" stroke-width="1.8" opacity=".6"/><path d="M62.9 2.9 L64.4 2.5 L63.7 6.6 L65.4 11.9 L67.8 12.6 L68.8 15 L70 16" stroke-width="1.8" opacity=".55"/><path d="M150.9 18.3 L152.5 13.3 L153.4 15.1 L157.4 14.8 L159.6 13.9 L161.8 14.9 L165.7 12.9 L167.6 15.5 L169 15.4 L173.4 12.4 L175.8 14.3 L178.3 10.8 L178.3 13.1 L182 10" stroke-width="1.6" opacity=".55"/><path d="M189.2 9.3 L192.9 8.8 L193.7 2.8 L195.9 1.1 L199.7 2.4 L201.1 5 L203 9" stroke-width="1.6" opacity=".55"/><path d="M210.4 7.8 L215.1 10.7 L216.1 5.3 L220.4 9.7 L221.2 10.7 L223.6 10.5 L224.5 4.5 L229.6 4.7 L229 7.7 L232.5 0.8 L234.2 6.7 L234.6 7.8 L236.5 6.1 L238.3 6.1 L242 10" stroke-width="1.9" opacity=".62"/><path d="M265.8 2.5 L269.2 3.4 L269.4 6 L269.9 7.1 L273.1 11 L272.9 8.8 L274.5 14.5 L278.7 7.3 L281.7 13.7 L282.6 9.9 L282.8 4.1 L286.1 3.5 L286.9 3.9 L288.3 7.3 L291.8 11.9 L294.1 11.9 L296 13.7 L298 14" stroke-width="1.7" opacity=".5"/><path d="M250 163C270 162 296 166 336 185S377 182 398 168" stroke="#666" stroke-width=".9" opacity=".8"/><path d="M67 292.6L80.8 284.5 107.7 271 121 249.5 140 234.7" stroke="#777" stroke-width=".9" opacity=".8"/></g><path d="M300 302L420 190 440 200 340 302z" fill="#9a9a9a" opacity=".25"/><path d="M350 302L468 98Q478 82 496 86L560 100V302z" fill="#9a9a9a" opacity=".45"/><path d="M366 302L474 100Q482 84 498 88L560 102V302z" fill="url(#cgA)"/><path d="M366 302L474 100Q482 84 498 88L560 102" fill="none" stroke="#e9e9e9" stroke-width="5"/><path d="M484 104L560 122V200L440 172z" fill="#bdbdbd"/><path d="M481 132L560 150V196L447 171z" fill="url(#lgA)"/><path d="M447 171L560 196" stroke="#e6e6e6" stroke-width="1.5"/><ellipse cx="481.6" cy="209.5" rx="14.5" ry="9.5" fill="#8c8c8c"/><ellipse cx="481.6" cy="207" rx="14" ry="9" fill="#3a3a3a" transform="rotate(14 481.6 207)"/><text x="481.6" y="209.5" font-family="Liberation Sans,sans-serif" font-size="7" font-weight="bold" fill="#d8d8d8" text-anchor="middle" transform="rotate(18 481.6 207)">MR</text><ellipse cx="517.6" cy="223.2" rx="14.5" ry="9.5" fill="#8c8c8c"/><ellipse cx="517.6" cy="220.7" rx="14" ry="9" fill="#3a3a3a" transform="rotate(14 517.6 220.7)"/><text x="517.6" y="223.2" font-family="Liberation Sans,sans-serif" font-size="7" font-weight="bold" fill="#d8d8d8" text-anchor="middle" transform="rotate(18 517.6 220.7)">M-</text><ellipse cx="549" cy="233.5" rx="14.5" ry="9.5" fill="#8c8c8c"/><ellipse cx="549" cy="231" rx="14" ry="9" fill="#3a3a3a" transform="rotate(14 549 231)"/><text x="549" y="233.5" font-family="Liberation Sans,sans-serif" font-size="7" font-weight="bold" fill="#d8d8d8" text-anchor="middle" transform="rotate(18 549 231)">M+</text><ellipse cx="466.6" cy="242.5" rx="14.5" ry="9.5" fill="#8c8c8c"/><ellipse cx="466.6" cy="240" rx="14" ry="9" fill="#3a3a3a" transform="rotate(14 466.6 240)"/><text x="466.6" y="244.7" font-family="Liberation Sans,sans-serif" font-size="13" font-weight="bold" fill="#d8d8d8" text-anchor="middle" transform="rotate(18 466.6 240)">7</text><ellipse cx="501" cy="251.5" rx="14.5" ry="9.5" fill="#8c8c8c"/><ellipse cx="501" cy="249" rx="14" ry="9" fill="#3a3a3a" transform="rotate(14 501 249)"/><text x="501" y="253.7" font-family="Liberation Sans,sans-serif" font-size="13" font-weight="bold" fill="#d8d8d8" text-anchor="middle" transform="rotate(18 501 249)">8</text><ellipse cx="540" cy="265.2" rx="14.5" ry="9.5" fill="#8c8c8c"/><ellipse cx="540" cy="262.7" rx="14" ry="9" fill="#3a3a3a" transform="rotate(14 540 262.7)"/><text x="540" y="267.4" font-family="Liberation Sans,sans-serif" font-size="13" font-weight="bold" fill="#d8d8d8" text-anchor="middle" transform="rotate(18 540 262.7)">9</text><ellipse cx="409.5" cy="260.5" rx="14.5" ry="9.5" fill="#8c8c8c"/><ellipse cx="409.5" cy="258" rx="14" ry="9" fill="#3a3a3a" transform="rotate(14 409.5 258)"/><text x="409.5" y="260.5" font-family="Liberation Sans,sans-serif" font-size="7" font-weight="bold" fill="#d8d8d8" text-anchor="middle" transform="rotate(18 409.5 258)">OFF</text><ellipse cx="447" cy="272.5" rx="14.5" ry="9.5" fill="#8c8c8c"/><ellipse cx="447" cy="270" rx="14" ry="9" fill="#3a3a3a" transform="rotate(14 447 270)"/><text x="447" y="274.7" font-family="Liberation Sans,sans-serif" font-size="13" font-weight="bold" fill="#d8d8d8" text-anchor="middle" transform="rotate(18 447 270)">4</text><ellipse cx="484.6" cy="284.5" rx="14.5" ry="9.5" fill="#8c8c8c"/><ellipse cx="484.6" cy="282" rx="14" ry="9" fill="#3a3a3a" transform="rotate(14 484.6 282)"/><text x="484.6" y="286.7" font-family="Liberation Sans,sans-serif" font-size="13" font-weight="bold" fill="#d8d8d8" text-anchor="middle" transform="rotate(18 484.6 282)">5</text><ellipse cx="525" cy="295.3" rx="14.5" ry="9.5" fill="#8c8c8c"/><ellipse cx="525" cy="292.8" rx="14" ry="9" fill="#3a3a3a" transform="rotate(14 525 292.8)"/><text x="525" y="297.5" font-family="Liberation Sans,sans-serif" font-size="13" font-weight="bold" fill="#d8d8d8" text-anchor="middle" transform="rotate(18 525 292.8)">6</text><ellipse cx="390" cy="290.5" rx="14.5" ry="9.5" fill="#8c8c8c"/><ellipse cx="390" cy="288" rx="14" ry="9" fill="#3a3a3a" transform="rotate(14 390 288)"/><text x="390" y="290.5" font-family="Liberation Sans,sans-serif" font-size="7" font-weight="bold" fill="#d8d8d8" text-anchor="middle" transform="rotate(18 390 288)">CE</text><ellipse cx="429" cy="299.5" rx="14.5" ry="9.5" fill="#8c8c8c"/><ellipse cx="429" cy="297" rx="14" ry="9" fill="#3a3a3a" transform="rotate(14 429 297)"/><text x="429" y="301.7" font-family="Liberation Sans,sans-serif" font-size="13" font-weight="bold" fill="#d8d8d8" text-anchor="middle" transform="rotate(18 429 297)">1</text><ellipse cx="468" cy="312.5" rx="14.5" ry="9.5" fill="#8c8c8c"/><ellipse cx="468" cy="310" rx="14" ry="9" fill="#3a3a3a" transform="rotate(14 468 310)"/><text x="468" y="314.7" font-family="Liberation Sans,sans-serif" font-size="13" font-weight="bold" fill="#d8d8d8" text-anchor="middle" transform="rotate(18 468 310)">2</text></g><rect x="32" y="18.7" width="419" height="72" fill="#ffff00"/><rect x="32" y="90" width="393" height="72" fill="#ffff00"/><rect x="32" y="161.5" width="195.7" height="72" fill="#ffff00"/><g font-family="Liberation Sans,sans-serif" font-weight="bold" font-size="57.5" fill="#333" stroke="#333" stroke-width="1.3" stroke-linejoin="round"><text x="34" y="77.3" textLength="418.5" lengthAdjust="spacingAndGlyphs">WHAT DO YOU PAY</text><text x="34" y="149.2" textLength="388" lengthAdjust="spacingAndGlyphs">WHEN SHOPPING</text><text x="33.5" y="221" textLength="196.5" lengthAdjust="spacingAndGlyphs">ONLINE?</text></g><defs><filter id="dfA" x="-5%" y="-10%" width="112%" height="125%"><feMorphology in="SourceAlpha" operator="dilate" radius="1.05" result="o"/><feOffset in="o" dx="2.6" dy="2.6" result="s0"/><feGaussianBlur in="s0" stdDeviation=".7" result="s1"/><feComponentTransfer in="s1" result="sh"><feFuncA type="linear" slope=".32"/></feComponentTransfer><feFlood flood-color="#111"/><feComposite in2="o" operator="in" result="ol"/><feMerge><feMergeNode in="sh"/><feMergeNode in="ol"/><feMergeNode in="SourceGraphic"/></feMerge></filter></defs><g filter="url(#dfA)" font-family="Liberation Sans,sans-serif" font-size="100" fill="#ffff00" stroke="#ffff00" stroke-width="2.5" stroke-linejoin="round"><text transform="matrix(0.665 0.0066 0.099 0.5825 172.2 278)">D</text><text transform="matrix(0.665 -0.0178 0.1022 0.6009 220.21 278.48)">i</text><text transform="matrix(0.665 -0.0314 0.1077 0.6334 234.98 278.09)">f</text><text transform="matrix(0.665 -0.0738 0.112 0.6587 253.46 277.21)">f</text><text transform="matrix(0.665 -0.0889 0.1161 0.683 271.95 275.16)">e</text><text transform="matrix(0.665 -0.0896 0.1277 0.7509 308.92 270.22)">r</text><text transform="matrix(0.665 -0.1406 0.1412 0.8306 331.07 267.24)">e</text><text transform="matrix(0.665 -0.234 0.1523 0.8958 368.04 259.42)">n</text><text transform="matrix(0.665 -0.2725 0.1677 0.9862 405.02 246.41)">t</text><text transform="matrix(0.665 -0.2849 0.1846 1.0856 423.5 238.84)">l</text><text transform="matrix(0.665 -0.3428 0.2016 1.186 438.27 232.51)">y</text><text transform="matrix(0.665 -0.3522 0.2198 1.2927 471.52 215.37)">!</text></g><g clip-path="url(#wmA)"><defs><filter id="dlA" x="-20%" y="-5%" width="140%" height="110%"><feMorphology operator="dilate" radius="8.5 0"/></filter></defs><g filter="url(#dlA)" font-family="Liberation Sans,sans-serif" font-size="100" font-weight="bold" fill="#ffff6b" letter-spacing="41"><text transform="matrix(.87 0 -1.9 3.89 246 735)">CO<tspan dx="-11">S</tspan></text></g></g><g font-family="Liberation Sans,sans-serif" font-size="16.6" fill="#111" stroke="#111" stroke-width="0.45" transform="scale(0.8735 1)"><text x="59.53" y="338.3" style="word-spacing:3.99px">Imagine this: You enter a supermarket and are asked right at the</text><text x="59.53" y="368.4" style="word-spacing:4.16px">door for your shopping list, your place of residence and your cell</text><text x="59.53" y="398.6" style="word-spacing:9.41px">phone. Then a store employee dashes through the store at</text><text x="59.53" y="428.7" style="word-spacing:6.06px">breakneck speed and makes everything a little more expensive,</text><text x="59.53" y="458.9" style="word-spacing:1.89px">because you come from a wealthy area, have the latest iPhone and</text><text x="59.53" y="489" style="word-spacing:3.18px">want a good wine for dinner. To do this, he puts all the expensive</text><text x="59.53" y="519.2" style="word-spacing:0.99px">items up front. That sounds strange? Maybe, but when buying on the</text><text x="59.53" y="549.3" style="word-spacing:3.55px">Internet with its dynamic prices and offers, that's exactly what can</text><text x="59.53" y="579.5">happen to you!</text><text x="59.53" y="680.6" style="word-spacing:2.81px">Even though it mostly goes unnoticed by us, prices on the Internet</text><text x="59.53" y="710.7" style="word-spacing:2.21px">are constantly on the move. Supply and demand, hypes, production</text></g><text transform="scale(.868 1)" x="59.91" y="637.4" font-family="Liberation Sans,sans-serif" font-size="17.5" font-weight="bold" font-style="italic" fill="#111">What is dynamic pricing?</text>
</svg></div>
<!-- h scroll -->
<div class="a" style="left:313px;top:968px;width:864px;height:16px;background:#f0f0f0"></div>
<svg style="left:317px;top:971px" width="6" height="10"><path d="M.5 5L5 .5v9z" fill="#666"/></svg>
<svg style="left:1167px;top:971.5px" width="6" height="10"><path d="M5.5 5L1 .5v9z" fill="#666"/></svg>
<!-- v scroll -->
<div class="a" style="left:1177px;top:189px;width:15px;height:795px;background:#f0f0f0"></div>
<svg style="left:1180px;top:194px" width="10" height="6"><path d="M5 .5l4.5 4.5h-9z" fill="#777"/></svg>
<div class="a" style="left:1180px;top:204px;width:9px;height:162px;background:#8b8b8b;border-radius:4.5px"></div>
<svg style="left:1180px;top:914px" width="10" height="6"><path d="M5 5.5L.5 1h9z" fill="#777"/></svg>
<div class="a" style="left:1178px;top:924px;width:14px;height:45px;border-left:1px solid #dedede;background:linear-gradient(#dedede,#dedede) 0 0/100% 1px no-repeat,linear-gradient(#dedede,#dedede) 0 15px/100% 1px no-repeat,linear-gradient(#dedede,#dedede) 0 29px/100% 1px no-repeat"></div>
<svg style="left:1180px;top:925px" width="10" height="44"><path d="M4.5 3.8l1.8 2.4H2.7zM4.5 6.6l2.6 3h-5.2zM1.9 33h5.2l-2.6 3zM2.7 36.4h3.6l-1.8 2.4z" fill="#555"/><circle cx="4.5" cy="21.5" r="2.6" fill="#e5343a"/></svg>
<!-- right splitter -->
<div class="a" style="left:1192px;top:189px;width:1px;height:795px;background:#d9d9d9"></div>
<div class="a" style="left:1194px;top:566px;width:7px;height:41px;background:#fff;border:1px solid #8c8c8c;border-radius:3px"></div>
<svg style="left:1196px;top:582px" width="4" height="8"><path d="M.5 1v6l2.7-3z" fill="#888"/></svg>

<!-- RIGHT PANEL -->
<div class="a" style="left:1203px;top:189px;width:283px;height:795px;background:#f0f0f0"></div>
<svg style="left:1208px;top:195px" width="18" height="18" fill="none" stroke="#444" stroke-width="1.2"><circle cx="9" cy="9" r="7.6"/><path d="M12.5 5.5l-2.3 4.7-4.7 2.3 2.3-4.7z" stroke="none" fill="#444"/><path d="M12.5 5.5l-2.3 4.7-2.4-2.4z" fill="#e0452f" stroke="none"/></svg>
<div class="pinkbox" style="left:1230px;top:192px;width:24px;height:24px;border-radius:4px"></div>
<svg style="left:1235px;top:195px" width="14" height="18" fill="#f8eeee" stroke="#2f86d8" stroke-width="1"><rect x=".75" y=".75" width="12.5" height="16.5" fill="#fff" stroke="#444" stroke-width="1.5"/><rect x="2.5" y="3.5" width="9" height="4.5"/><rect x="2.5" y="10" width="9" height="4.5"/></svg>
<div class="t" style="left:1260px;top:193.3px;font-size:16.3px;color:#444;line-height:18px;height:18px;-webkit-text-stroke:.25px #444">A</div>
<svg style="left:1262px;top:199px" width="16" height="16" fill="none"><path d="M3.6 12.1L12.6 3.7" stroke="#2f86d8" stroke-width="3.5" stroke-linecap="round"/><path d="M4.4 11.4L12.2 4.1" stroke="#f0f0f0" stroke-width="1.3"/><path d="M1.9 14l1-2.8 1.9 1.9z" fill="#2f86d8" stroke="#2f86d8" stroke-width=".6" stroke-linejoin="round"/></svg>
<div class="arr" style="left:1471px;top:202px;border-top-color:#111"></div>
<div class="a" style="left:1205px;top:224px;width:274px;height:1px;background:linear-gradient(90deg,#d4d4d4 80%,#ececec)"></div>
<!-- thumbs -->
<div class="a" style="left:1220px;top:252px;width:232.6px;height:327px;background:#b0b0b0"></div>
<div class="a" style="left:1220.5px;top:252px;width:231px;height:326px;background:#fff;overflow:hidden">
<svg style="left:-.6px;top:0" width="232.2" height="326" viewBox="0 0 555.6 780.7" preserveAspectRatio="none"><defs><clipPath id="wmB"><rect x="0" y="302" width="555" height="480"/></clipPath></defs>
<defs><linearGradient id="pgB" x1="0" y1="0" x2="1" y2="1"><stop offset="0" stop-color="#dcdcdc"/><stop offset=".35" stop-color="#ececec"/><stop offset=".7" stop-color="#e2e2e2"/><stop offset="1" stop-color="#cfcfcf"/></linearGradient><linearGradient id="cgB" x1="0" y1="0" x2="1" y2="0.6"><stop offset="0" stop-color="#d6d6d6"/><stop offset=".5" stop-color="#c2c2c2"/><stop offset="1" stop-color="#b4b4b4"/></linearGradient><linearGradient id="lgB" x1="0" y1="0" x2="1" y2="1"><stop offset="0" stop-color="#676767"/><stop offset="1" stop-color="#8f8f8f"/></linearGradient><clipPath id="pcB"><rect x="0" y="0" width="555.6" height="302"/></clipPath></defs><g clip-path="url(#pcB)"><rect x="0" y="0" width="555.6" height="302" fill="url(#pgB)"/><path d="M0 60L40 0H0z" fill="#e9e9e9"/><path d="M0 215L120 150 30 0H0z" fill="#e6e6e6" opacity=".7"/><path d="M200 160L555 160 555 302 60 302z" fill="#ececec" opacity=".8"/><g font-family="Liberation Sans,sans-serif" font-size="5" fill="#8a8a8a" opacity=".7" transform="rotate(-12 470 50)"><text x="448" y="-6">10.19</text><text x="477" y="-6">12.83</text><text x="506" y="-6">1.09</text><text x="535" y="-6">17.12</text><text x="449.6" y="0.4">11.74</text><text x="478.6" y="0.4">1.64</text><text x="507.6" y="0.4">6.04</text><text x="536.6" y="0.4">2.55</text><text x="451.2" y="6.8">13.08</text><text x="480.2" y="6.8">7.11</text><text x="509.2" y="6.8">17.54</text><text x="538.2" y="6.8">1.72</text><text x="452.8" y="13.2">3.28</text><text x="481.8" y="13.2">20.8</text><text x="510.8" y="13.2">18.07</text><text x="539.8" y="13.2">18.74</text><text x="454.4" y="19.6">12.06</text><text x="483.4" y="19.6">7.05</text><text x="512.4" y="19.6">17.17</text><text x="541.4" y="19.6">9.53</text><text x="456" y="26">4.69</text><text x="485" y="26">3.73</text><text x="514" y="26">9.71</text><text x="543" y="26">5.13</text><text x="457.6" y="32.4">18.73</text><text x="486.6" y="32.4">20.24</text><text x="515.6" y="32.4">11.12</text><text x="544.6" y="32.4">17.91</text><text x="459.2" y="38.8">2.72</text><text x="488.2" y="38.8">1.79</text><text x="517.2" y="38.8">6.63</text><text x="546.2" y="38.8">17.54</text><text x="460.8" y="45.2">10.59</text><text x="489.8" y="45.2">18.58</text><text x="518.8" y="45.2">11.38</text><text x="547.8" y="45.2">7.23</text><text x="462.4" y="51.6">7.1</text><text x="491.4" y="51.6">18.38</text><text x="520.4" y="51.6">16.63</text><text x="549.4" y="51.6">10.93</text><text x="464" y="58">14.36</text><text x="493" y="58">19.09</text><text x="522" y="58">3.65</text><text x="551" y="58">13.21</text><text x="465.6" y="64.4">10.19</text><text x="494.6" y="64.4">15.53</text><text x="523.6" y="64.4">1.85</text><text x="552.6" y="64.4">2.97</text><text x="467.2" y="70.8">17.73</text><text x="496.2" y="70.8">10.43</text><text x="525.2" y="70.8">11.76</text><text x="554.2" y="70.8">15.74</text><text x="468.8" y="77.2">14.08</text><text x="497.8" y="77.2">2.34</text><text x="526.8" y="77.2">15.89</text><text x="555.8" y="77.2">2.07</text><text x="470.4" y="83.6">9.82</text><text x="499.4" y="83.6">18.87</text><text x="528.4" y="83.6">14.36</text><text x="557.4" y="83.6">12.85</text><text x="472" y="90">11.02</text><text x="501" y="90">14.45</text><text x="530" y="90">5.78</text><text x="559" y="90">3.63</text><text x="473.6" y="96.4">1.27</text><text x="502.6" y="96.4">9.16</text><text x="531.6" y="96.4">7.5</text><text x="560.6" y="96.4">12.63</text></g><path d="M432 0L466 106" stroke="#8a8a8a" stroke-width="1" opacity=".8"/><path d="M420 88L452 190" stroke="#9a9a9a" stroke-width=".8" opacity=".8"/><g font-family="Liberation Sans,sans-serif" font-size="6" fill="#444" font-weight="bold" opacity=".85"><text x="433" y="98">10,7%</text><text x="437" y="109.5">9,5%</text><text x="441" y="121">8,3%</text></g><g font-family="Liberation Sans,sans-serif" font-size="4.6" fill="#808080" opacity=".75" transform="rotate(-17 10 60)"><text x="-8" y="30">5,21</text><text x="8" y="30">28,6</text><text x="-6" y="37.5">35,35</text><text x="8" y="37.5">8,6</text><text x="-8" y="45">35,35</text><text x="8" y="45">26,5</text><text x="-6" y="52.5">24,29</text><text x="8" y="52.5">9,1</text><text x="-8" y="60">11,19</text><text x="8" y="60">14,3</text><text x="-6" y="67.5">0,62</text><text x="8" y="67.5">37,2</text><text x="-8" y="75">16,36</text><text x="8" y="75">0,2</text><text x="-6" y="82.5">26,68</text><text x="8" y="82.5">23,9</text><text x="-8" y="90">36,40</text><text x="8" y="90">8,8</text><text x="-6" y="97.5">39,83</text><text x="8" y="97.5">3,7</text><text x="-8" y="105">35,50</text><text x="8" y="105">25,6</text><text x="-6" y="112.5">25,13</text><text x="8" y="112.5">30,6</text><text x="-8" y="120">3,24</text><text x="8" y="120">4,3</text><text x="-6" y="127.5">28,20</text><text x="8" y="127.5">7,5</text><text x="-8" y="135">38,06</text><text x="8" y="135">6,0</text><text x="-6" y="142.5">36,19</text><text x="8" y="142.5">34,1</text><text x="-8" y="150">23,78</text><text x="8" y="150">1,1</text><text x="-6" y="157.5">13,78</text><text x="8" y="157.5">24,2</text><text x="-8" y="165">40,32</text><text x="8" y="165">22,9</text><text x="-6" y="172.5">23,60</text><text x="8" y="172.5">7,1</text><text x="-8" y="180">31,59</text><text x="8" y="180">30,7</text><text x="-6" y="187.5">19,10</text><text x="8" y="187.5">9,1</text></g><g stroke="#bdbdbd" stroke-width=".6" opacity=".8"><path d="M20 165L-20 302"/><path d="M80 165L40 302"/><path d="M140 165L100 302"/><path d="M200 165L160 302"/><path d="M260 165L220 302"/><path d="M320 165L280 302"/><path d="M380 165L340 302"/><path d="M440 165L400 302"/><path d="M0 185L555 175"/><path d="M0 213L555 203"/><path d="M0 241L555 231"/><path d="M0 269L555 259"/><path d="M0 297L555 287"/></g><defs><filter id="blB" x="-5%" y="-5%" width="110%" height="110%"><feGaussianBlur stdDeviation=".55"/></filter></defs><g fill="none" stroke="#383838" stroke-linejoin="round" filter="url(#blB)"><path d="M-1.5 303.1 L3.7 295.2 L5.3 294.4 L8.6 294.8 L9 285.4 L14.7 286.5 L17.1 280 L18 283.4 L19.4 282.2 L24.4 270.9 L23.1 272.3 L29.1 267.8 L28.5 265 L30.4 259.8 L34.7 258.8 L36.6 253 L39.3 251.6 L42.9 245 L48.5 247.2 L51 241.2 L55.8 244.6 L53.9 243.6 L58 250.7 L60.5 251.9 L61.7 257.8 L61.2 260.8 L64.1 266.7 L63.1 268 L61.8 268.6 L65.4 273.7 L63.5 278.6 L66.2 283.3 L65.4 284.8 L66.5 291.5 L67.1 291.6 L67.3 284.8 L65.8 287.2 L70 282.7 L67.9 275.3 L68.7 279 L70.1 271.4 L70.8 265 L69.7 267.9 L70.3 259.9 L69.4 257.1 L72.5 248.6 L72.1 252.4 L74.3 248.3 L75.8 242.9 L76.5 238.7 L76.2 239.3 L81.9 234.2 L85.2 237.7 L88.2 237.4 L90 243.3 L91.3 245.1 L90 246.5 L91.6 253 L95.4 258.3 L96.2 261.8 L95 265.4 L97.7 261.9 L95.8 264.9 L99.5 270.6 L97.6 277.6 L99.3 276.2 L99.3 283.9 L100.1 285.2 L103 290.4 L102.1 294.2 L101.7 297 L103.4 291.6 L102.2 294.3 L103.9 284.5 L104.4 286.4 L102.1 275.5 L102.7 278.2 L102.8 274.5 L105 269.4 L103.3 269.7 L105.7 261.9 L103.4 259.5 L104.2 255.2 L104 252.1 L103 245.4 L106.8 247 L104.2 243.2 L104.4 247.5 L106.3 246.3 L104.5 246.2 L107.2 250 L107.2 261.8 L106.3 258.2 L107.7 269 L107.2 268.3 L106.1 270.4 L105.6 276.9 L106.7 276.1 L105.5 283.8 L106.5 285.9 L106.8 292.8 L109.3 288.6 L106.6 294.9 L108 300" stroke-width="2.4" opacity=".72"/><path d="M230.9 167.5 L227.8 162.6 L232.3 172.9 L232.6 172.3 L233.3 179.1 L234.2 178.3 L234.6 184.4 L236.9 194.2 L238.9 193.4 L238 194.1 L237.5 195 L240.8 201.3 L241.7 210.4 L243.7 210.5 L243.7 208.5 L245.5 213 L247.6 225 L249.1 220.3 L250.7 229.9 L250.7 234.4 L251.5 236.7 L250.3 242.1 L253.7 237.3 L253.5 246.3 L252.8 247.9 L253.6 255.3 L254.3 257.9 L254.3 261.8 L257.4 261.1 L256.5 269.2 L257.9 268.4 L256.2 270.2 L259 272.2 L260.5 276.7 L261.2 280.6 L262 288.1 L260.6 289.7 L261.8 293.9 L260.9 293.6 L262.4 300" stroke-width="2.4" opacity=".7"/><path d="M265.3 163.4 L266.2 167.6 L267.6 165.7 L265.1 177 L266.4 174.5 L270 180.4 L269.5 184 L268.9 184.3 L269.1 195 L268.9 197.3 L269.8 194 L269.9 202.8 L267.6 200.7 L269.9 208.6 L269 216.2 L268.7 220.1 L267 222.4 L267 227.3 L268.7 222.4 L265.1 227.1 L268.6 232.8 L267.7 235 L267.7 239.4 L267.6 245 L269.3 251.8 L270.3 255.6 L271.7 259.8 L271.5 255.2 L272.9 266.8 L273.7 266.4 L273.7 266.2 L275 273.3 L273.4 271.6 L276.7 284.3 L274.1 285.9 L276.4 282.8 L276.6 292.4 L280.1 288.6 L279.7 292 L280 300" stroke-width="2.4" opacity=".7"/><path d="M284.1 159.4 L286.5 163.3 L286.7 169.1 L292.2 176.5 L293.2 174.1 L293.9 178 L294 179.6 L295.8 191.2 L300.3 193.4 L302.1 190.3 L301.8 197.7 L305.6 203.1 L308.2 198.5 L308.8 207.4 L310.3 205.5 L312.1 207.7 L315.2 219 L314.6 216.8 L317.3 223 L318.2 229.3 L317.6 228.4 L319.1 232.1 L318.2 234.4 L322.2 235.2 L319.9 244.6 L322 247.1 L324.2 248.5 L327.9 250.2 L326.7 253.5 L329 257.5 L329.1 265.4 L330.3 266.8 L334.3 265.4 L331.8 269.9 L336.3 277 L335.3 277.4 L336.8 282.2 L338 288 L343.6 294.1 L344.7 297.6 L343.2 294.4 L347.2 300" stroke-width="2.4" opacity=".68"/><path d="M336.4 163 L335.6 170.1 L335.5 170.3 L339 170 L338.1 177.4 L336.7 178.7 L339.4 182.4 L339.9 183.1 L338.5 185.9 L339.8 195.5 L340.5 197.5 L340.1 200.4 L339.6 199.8 L342.2 206.4 L341.8 204.5 L341.8 208.6 L343.2 214" stroke-width="2" opacity=".6"/><path d="M387.8 163.6 L388.4 165.6 L389.5 172.7 L389.6 172.2 L389.8 176.6 L390.3 181" stroke-width="1.8" opacity=".55"/><path d="M38.4 1.7 L39.9 5.1 L40.8 7 L39.5 5.8 L43.4 9 L44.9 3.6 L45.2 2.9 L47.1 3.5 L46.5 3.3 L48.3 10.4 L50.8 7.4 L51 12" stroke-width="1.8" opacity=".6"/><path d="M62.9 2.9 L64.4 2.5 L63.7 6.6 L65.4 11.9 L67.8 12.6 L68.8 15 L70 16" stroke-width="1.8" opacity=".55"/><path d="M150.9 18.3 L152.5 13.3 L153.4 15.1 L157.4 14.8 L159.6 13.9 L161.8 14.9 L165.7 12.9 L167.6 15.5 L169 15.4 L173.4 12.4 L175.8 14.3 L178.3 10.8 L178.3 13.1 L182 10" stroke-width="1.6" opacity=".55"/><path d="M189.2 9.3 L192.9 8.8 L193.7 2.8 L195.9 1.1 L199.7 2.4 L201.1 5 L203 9" stroke-width="1.6" opacity=".55"/><path d="M210.4 7.8 L215.1 10.7 L216.1 5.3 L220.4 9.7 L221.2 10.7 L223.6 10.5 L224.5 4.5 L229.6 4.7 L229 7.7 L232.5 0.8 L234.2 6.7 L234.6 7.8 L236.5 6.1 L238.3 6.1 L242 10" stroke-width="1.9" opacity=".62"/><path d="M265.8 2.5 L269.2 3.4 L269.4 6 L269.9 7.1 L273.1 11 L272.9 8.8 L274.5 14.5 L278.7 7.3 L281.7 13.7 L282.6 9.9 L282.8 4.1 L286.1 3.5 L286.9 3.9 L288.3 7.3 L291.8 11.9 L294.1 11.9 L296 13.7 L298 14" stroke-width="1.7" opacity=".5"/><path d="M250 163C270 162 296 166 336 185S377 182 398 168" stroke="#666" stroke-width=".9" opacity=".8"/><path d="M67 292.6L80.8 284.5 107.7 271 121 249.5 140 234.7" stroke="#777" stroke-width=".9" opacity=".8"/></g><path d="M300 302L420 190 440 200 340 302z" fill="#9a9a9a" opacity=".25"/><path d="M350 302L468 98Q478 82 496 86L560 100V302z" fill="#9a9a9a" opacity=".45"/><path d="M366 302L474 100Q482 84 498 88L560 102V302z" fill="url(#cgB)"/><path d="M366 302L474 100Q482 84 498 88L560 102" fill="none" stroke="#e9e9e9" stroke-width="5"/><path d="M484 104L560 122V200L440 172z" fill="#bdbdbd"/><path d="M481 132L560 150V196L447 171z" fill="url(#lgB)"/><path d="M447 171L560 196" stroke="#e6e6e6" stroke-width="1.5"/><ellipse cx="481.6" cy="209.5" rx="14.5" ry="9.5" fill="#8c8c8c"/><ellipse cx="481.6" cy="207" rx="14" ry="9" fill="#3a3a3a" transform="rotate(14 481.6 207)"/><text x="481.6" y="209.5" font-family="Liberation Sans,sans-serif" font-size="7" font-weight="bold" fill="#d8d8d8" text-anchor="middle" transform="rotate(18 481.6 207)">MR</text><ellipse cx="517.6" cy="223.2" rx="14.5" ry="9.5" fill="#8c8c8c"/><ellipse cx="517.6" cy="220.7" rx="14" ry="9" fill="#3a3a3a" transform="rotate(14 517.6 220.7)"/><text x="517.6" y="223.2" font-family="Liberation Sans,sans-serif" font-size="7" font-weight="bold" fill="#d8d8d8" text-anchor="middle" transform="rotate(18 517.6 220.7)">M-</text><ellipse cx="549" cy="233.5" rx="14.5" ry="9.5" fill="#8c8c8c"/><ellipse cx="549" cy="231" rx="14" ry="9" fill="#3a3a3a" transform="rotate(14 549 231)"/><text x="549" y="233.5" font-family="Liberation Sans,sans-serif" font-size="7" font-weight="bold" fill="#d8d8d8" text-anchor="middle" transform="rotate(18 549 231)">M+</text><ellipse cx="466.6" cy="242.5" rx="14.5" ry="9.5" fill="#8c8c8c"/><ellipse cx="466.6" cy="240" rx="14" ry="9" fill="#3a3a3a" transform="rotate(14 466.6 240)"/><text x="466.6" y="244.7" font-family="Liberation Sans,sans-serif" font-size="13" font-weight="bold" fill="#d8d8d8" text-anchor="middle" transform="rotate(18 466.6 240)">7</text><ellipse cx="501" cy="251.5" rx="14.5" ry="9.5" fill="#8c8c8c"/><ellipse cx="501" cy="249" rx="14" ry="9" fill="#3a3a3a" transform="rotate(14 501 249)"/><text x="501" y="253.7" font-family="Liberation Sans,sans-serif" font-size="13" font-weight="bold" fill="#d8d8d8" text-anchor="middle" transform="rotate(18 501 249)">8</text><ellipse cx="540" cy="265.2" rx="14.5" ry="9.5" fill="#8c8c8c"/><ellipse cx="540" cy="262.7" rx="14" ry="9" fill="#3a3a3a" transform="rotate(14 540 262.7)"/><text x="540" y="267.4" font-family="Liberation Sans,sans-serif" font-size="13" font-weight="bold" fill="#d8d8d8" text-anchor="middle" transform="rotate(18 540 262.7)">9</text><ellipse cx="409.5" cy="260.5" rx="14.5" ry="9.5" fill="#8c8c8c"/><ellipse cx="409.5" cy="258" rx="14" ry="9" fill="#3a3a3a" transform="rotate(14 409.5 258)"/><text x="409.5" y="260.5" font-family="Liberation Sans,sans-serif" font-size="7" font-weight="bold" fill="#d8d8d8" text-anchor="middle" transform="rotate(18 409.5 258)">OFF</text><ellipse cx="447" cy="272.5" rx="14.5" ry="9.5" fill="#8c8c8c"/><ellipse cx="447" cy="270" rx="14" ry="9" fill="#3a3a3a" transform="rotate(14 447 270)"/><text x="447" y="274.7" font-family="Liberation Sans,sans-serif" font-size="13" font-weight="bold" fill="#d8d8d8" text-anchor="middle" transform="rotate(18 447 270)">4</text><ellipse cx="484.6" cy="284.5" rx="14.5" ry="9.5" fill="#8c8c8c"/><ellipse cx="484.6" cy="282" rx="14" ry="9" fill="#3a3a3a" transform="rotate(14 484.6 282)"/><text x="484.6" y="286.7" font-family="Liberation Sans,sans-serif" font-size="13" font-weight="bold" fill="#d8d8d8" text-anchor="middle" transform="rotate(18 484.6 282)">5</text><ellipse cx="525" cy="295.3" rx="14.5" ry="9.5" fill="#8c8c8c"/><ellipse cx="525" cy="292.8" rx="14" ry="9" fill="#3a3a3a" transform="rotate(14 525 292.8)"/><text x="525" y="297.5" font-family="Liberation Sans,sans-serif" font-size="13" font-weight="bold" fill="#d8d8d8" text-anchor="middle" transform="rotate(18 525 292.8)">6</text><ellipse cx="390" cy="290.5" rx="14.5" ry="9.5" fill="#8c8c8c"/><ellipse cx="390" cy="288" rx="14" ry="9" fill="#3a3a3a" transform="rotate(14 390 288)"/><text x="390" y="290.5" font-family="Liberation Sans,sans-serif" font-size="7" font-weight="bold" fill="#d8d8d8" text-anchor="middle" transform="rotate(18 390 288)">CE</text><ellipse cx="429" cy="299.5" rx="14.5" ry="9.5" fill="#8c8c8c"/><ellipse cx="429" cy="297" rx="14" ry="9" fill="#3a3a3a" transform="rotate(14 429 297)"/><text x="429" y="301.7" font-family="Liberation Sans,sans-serif" font-size="13" font-weight="bold" fill="#d8d8d8" text-anchor="middle" transform="rotate(18 429 297)">1</text><ellipse cx="468" cy="312.5" rx="14.5" ry="9.5" fill="#8c8c8c"/><ellipse cx="468" cy="310" rx="14" ry="9" fill="#3a3a3a" transform="rotate(14 468 310)"/><text x="468" y="314.7" font-family="Liberation Sans,sans-serif" font-size="13" font-weight="bold" fill="#d8d8d8" text-anchor="middle" transform="rotate(18 468 310)">2</text></g><rect x="32" y="18.7" width="419" height="72" fill="#ffff00"/><rect x="32" y="90" width="393" height="72" fill="#ffff00"/><rect x="32" y="161.5" width="195.7" height="72" fill="#ffff00"/><g font-family="Liberation Sans,sans-serif" font-weight="bold" font-size="57.5" fill="#333" stroke="#333" stroke-width="1.3" stroke-linejoin="round"><text x="34" y="77.3" textLength="418.5" lengthAdjust="spacingAndGlyphs">WHAT DO YOU PAY</text><text x="34" y="149.2" textLength="388" lengthAdjust="spacingAndGlyphs">WHEN SHOPPING</text><text x="33.5" y="221" textLength="196.5" lengthAdjust="spacingAndGlyphs">ONLINE?</text></g><defs><filter id="dfB" x="-5%" y="-10%" width="112%" height="125%"><feMorphology in="SourceAlpha" operator="dilate" radius="2.4" result="o"/><feOffset in="o" dx="2.6" dy="2.6" result="s0"/><feGaussianBlur in="s0" stdDeviation=".7" result="s1"/><feComponentTransfer in="s1" result="sh"><feFuncA type="linear" slope=".32"/></feComponentTransfer><feFlood flood-color="#111"/><feComposite in2="o" operator="in" result="ol"/><feMerge><feMergeNode in="sh"/><feMergeNode in="ol"/><feMergeNode in="SourceGraphic"/></feMerge></filter></defs><g filter="url(#dfB)" font-family="Liberation Sans,sans-serif" font-size="100" fill="#ffff00" stroke="#ffff00" stroke-width="2.5" stroke-linejoin="round"><text transform="matrix(0.665 0.0066 0.099 0.5825 172.2 278)">D</text><text transform="matrix(0.665 -0.0178 0.1022 0.6009 220.21 278.48)">i</text><text transform="matrix(0.665 -0.0314 0.1077 0.6334 234.98 278.09)">f</text><text transform="matrix(0.665 -0.0738 0.112 0.6587 253.46 277.21)">f</text><text transform="matrix(0.665 -0.0889 0.1161 0.683 271.95 275.16)">e</text><text transform="matrix(0.665 -0.0896 0.1277 0.7509 308.92 270.22)">r</text><text transform="matrix(0.665 -0.1406 0.1412 0.8306 331.07 267.24)">e</text><text transform="matrix(0.665 -0.234 0.1523 0.8958 368.04 259.42)">n</text><text transform="matrix(0.665 -0.2725 0.1677 0.9862 405.02 246.41)">t</text><text transform="matrix(0.665 -0.2849 0.1846 1.0856 423.5 238.84)">l</text><text transform="matrix(0.665 -0.3428 0.2016 1.186 438.27 232.51)">y</text><text transform="matrix(0.665 -0.3522 0.2198 1.2927 471.52 215.37)">!</text></g><g clip-path="url(#wmB)"><defs><filter id="dlB" x="-20%" y="-5%" width="140%" height="110%"><feMorphology operator="dilate" radius="8.5 0"/></filter></defs><g filter="url(#dlB)" font-family="Liberation Sans,sans-serif" font-size="100" font-weight="bold" fill="#ffff6b" letter-spacing="41"><text transform="matrix(.87 0 -1.9 3.89 246 735)">CO<tspan dx="-11">S</tspan></text></g></g><g font-family="Liberation Sans,sans-serif" font-size="16.6" fill="#2a2a2a" stroke="#2a2a2a" stroke-width="0.22" transform="scale(0.8735 1)"><text x="59.53" y="338.3" style="word-spacing:3.99px">Imagine this: You enter a supermarket and are asked right at the</text><text x="59.53" y="368.4" style="word-spacing:4.16px">door for your shopping list, your place of residence and your cell</text><text x="59.53" y="398.6" style="word-spacing:9.41px">phone. Then a store employee dashes through the store at</text><text x="59.53" y="428.7" style="word-spacing:6.06px">breakneck speed and makes everything a little more expensive,</text><text x="59.53" y="458.9" style="word-spacing:1.89px">because you come from a wealthy area, have the latest iPhone and</text><text x="59.53" y="489" style="word-spacing:3.18px">want a good wine for dinner. To do this, he puts all the expensive</text><text x="59.53" y="519.2" style="word-spacing:0.99px">items up front. That sounds strange? Maybe, but when buying on the</text><text x="59.53" y="549.3" style="word-spacing:3.55px">Internet with its dynamic prices and offers, that's exactly what can</text><text x="59.53" y="579.5">happen to you!</text><text x="59.53" y="680.6" style="word-spacing:2.81px">Even though it mostly goes unnoticed by us, prices on the Internet</text><text x="59.53" y="710.7" style="word-spacing:2.21px">are constantly on the move. Supply and demand, hypes, production</text></g><text transform="scale(.868 1)" x="59.91" y="637.4" font-family="Liberation Sans,sans-serif" font-size="17.5" font-weight="bold" font-style="italic" fill="#111">What is dynamic pricing?</text>
</svg></div>
<div class="t c" style="left:1335px;top:592px">1</div>
<div class="a" style="left:1220px;top:627px;width:232.6px;height:328px;background:#b0b0b0"></div>
<div class="a" style="left:1220.5px;top:628px;width:231px;height:326px;background:#fff;overflow:hidden">
<svg style="left:-.6px;top:0" width="232.2" height="326" viewBox="0 0 555.6 780.7" preserveAspectRatio="none">
<defs><filter id="dlC" x="-20%" y="-5%" width="140%" height="110%"><feMorphology operator="dilate" radius="13 0"/></filter></defs><g filter="url(#dlC)" font-family="Liberation Sans,sans-serif" font-size="100" font-weight="bold" fill="#ffff6b" letter-spacing="14"><text transform="matrix(1 0 -1.77 3.36 -36 265)">STS</text></g><g font-family="Liberation Sans,sans-serif" font-size="16.6" fill="#2a2a2a" stroke="#2a2a2a" stroke-width=".22" transform="scale(0.8735 1)"><text x="59.53" y="68.5" style="word-spacing:2.36px">bottlenecks, seasons, and even world events are factored in for the</text><text x="59.53" y="98.6" style="word-spacing:2.48px">purpose of optimizing profits. All this one knows and perceives to a</text><text x="59.53" y="128.8" style="word-spacing:5.6px">greater or lesser extent. However, there is another, personalized</text><text x="59.53" y="158.9" style="word-spacing:1.05px">variant of this happening, when data is used to analyze the customer</text><text x="59.53" y="189.1" style="word-spacing:3.04px">in more detail and create a highly personalized offer. If it is only a</text><text x="59.53" y="219.2" style="word-spacing:2.83px">matter of the customer not being presented with another swimming</text><text x="59.53" y="249.4" style="word-spacing:9.19px">pool or toilet seat immediately after a purchase, this is still</text><text x="59.53" y="279.5" style="word-spacing:3.01px">understandable; hardly anyone collects these products. Sometimes,</text><text x="59.53" y="309.7" style="word-spacing:4.66px">however, it goes against the interests of the customer, one turns</text><text x="59.53" y="339.8" style="word-spacing:6.97px">unsightly at the prices or wants to entice him to buy a more</text><text x="59.53" y="370" style="word-spacing:2.35px">expensive product. Let's take a little look at what can play a role in</text><text x="59.53" y="400.1">dynamic pricing!</text><text x="59.53" y="520.8" style="word-spacing:3.38px">We all probably know the wild roller coaster when it comes to the</text><text x="59.53" y="551" style="word-spacing:1.55px">cost of a liter of gasoline. But: do car batteries cost the same at any</text><text x="59.53" y="581.1" style="word-spacing:1.22px">time of day? Think about it sharply: When do you usually notice your</text><text x="59.53" y="611.3" style="word-spacing:2.04px">battery has given up the ghost? In the morning! A test by consumer</text><text x="59.53" y="641.4" style="word-spacing:5.4px">watchdogs showed that batteries or tires were up to 30 percent</text><text x="59.53" y="671.6" style="word-spacing:7.62px">more expensive at online retailers in the morning than in the</text><text x="59.53" y="701.7" style="word-spacing:2.08px">afternoon. Hardly any retailers sit at their computers and crunch the</text></g><text transform="scale(.868 1)" x="59.91" y="476.1" font-family="Liberation Sans,sans-serif" font-size="17.5" font-weight="bold" font-style="italic" fill="#111">Price by time of day and season</text>
</svg></div>
<div class="t c" style="left:1335px;top:968px">2</div>
<svg style="left:1469px;top:240px" width="10" height="6"><path d="M5 .5l4.5 4.5h-9z" fill="#777"/></svg>
<div class="a" style="left:1470px;top:250px;width:9px;height:352px;background:#8b8b8b;border-radius:4.5px"></div>
<svg style="left:1469px;top:968px" width="10" height="6"><path d="M5 5.5L.5 1h9z" fill="#777"/></svg>

<!-- STATUS BAR -->
<div class="a" style="left:0;top:985px;width:1486px;height:28px;background:#f0f0f0"></div>
<div class="ssep" style="left:369px"></div><div class="ssep" style="left:471px"></div><div class="ssep" style="left:548px"></div><div class="ssep" style="left:620px"></div><div class="ssep" style="left:737px"></div><div class="ssep" style="left:883px"></div><div class="ssep" style="left:1022px"></div><div class="ssep" style="left:1088px"></div>
<div class="sb" style="left:375px;letter-spacing:-.2px">L 18 Col 71</div>
<div class="sb" style="left:477px;letter-spacing:-.1px">Section 1</div>
<div class="sb" style="left:554px;letter-spacing:-.1px">Chapter 1</div>
<div class="sb" style="left:626px;letter-spacing:-.2px">Page 4 of 4</div>
<div class="sb" style="left:743px;letter-spacing:-.2px">English (United States)</div>
<div class="sb" style="left:889px;letter-spacing:-.2px">756 words</div>
<div class="sb" style="left:1103px">Ins</div>
<div class="pinkbox" style="left:1134px;top:986px;width:24px;height:23px"></div>
<svg style="left:1139px;top:991px" width="14" height="15" fill="none" stroke="#3c3c3c" stroke-width="1"><rect x=".5" y=".5" width="13" height="14"/><path d="M2.5 3.5h9M2.5 5.5h9M2.5 7.5h9M2.5 9.5h9M2.5 11.5h9"/></svg>
<svg style="left:1165px;top:993.5px" width="12" height="11" stroke="#3c3c3c" stroke-width="1"><path d="M0 .5h11M0 2.5h11M0 4.5h11M0 6.5h11M0 8.5h11M0 10.5h11"/></svg>
<svg style="left:1189px;top:991px" width="15" height="15" fill="none" stroke="#3c3c3c" stroke-width="1.1"><rect x=".6" y=".6" width="13.8" height="13.8"/><path d="M.6 3.5h13.8M.6 11.5h13.8"/></svg>
<svg style="left:1214px;top:993.5px" width="15" height="11" stroke="#3c3c3c" stroke-width="1.3"><path d="M4.5 1.5h10M4.5 5.5h8M4.5 9.5h10"/><path d="M0 1.5h2.5M0 5.5h2.5M0 9.5h2.5" stroke-width="2"/></svg>
<svg style="left:1237px;top:991px" width="18" height="14" fill="none" stroke="#3c3c3c" stroke-width="1.1"><path d="M8.5 2.5C6.5 1 3 .8 1 1.5v10.5c2-.7 5.5-.5 7.5 1 2-1.5 5.5-1.7 7.5-1V1.5c-2-.7-5.5-.5-7.5 1zM8.5 2.5V13"/></svg>
<div class="a" style="left:1267px;top:997px;width:7px;height:1px;background:#d94040"></div>
<div class="a" style="left:1281px;top:997px;width:110px;height:1px;background:#d4d4d4"></div>
<div class="a" style="left:1335px;top:991px;width:1px;height:13px;background:#c8c8c8"></div>
<div class="a" style="left:1306px;top:992px;width:11px;height:11px;border-radius:50%;background:#fff;border:1px solid #666"></div>
<svg style="left:1396px;top:993px" width="9" height="9" stroke="#3f9a3f" stroke-width="1.2"><path d="M0 4.5h8M4 .5v8"/></svg>
<div class="sb" style="left:1424px">70%</div>
<div class="t" style="left:1459px;top:986px;font-size:12px;color:#444">»</div>
<div class="a" style="left:0;top:1005px;width:8px;height:8px;background:radial-gradient(circle at 100% 0,transparent 7.5px,#5b6785 8.5px)"></div>
<div class="a" style="left:1478px;top:1005px;width:8px;height:8px;background:radial-gradient(circle at 0 0,transparent 7.5px,#5b6785 8.5px)"></div>
<div class="a" style="left:1479px;top:0;width:7px;height:7px;background:radial-gradient(circle at 0 100%,transparent 6.5px,#a9c2e6 7.5px)"></div>
<div class="a" style="left:0;top:0;width:7px;height:7px;background:radial-gradient(circle at 100% 100%,transparent 5.5px,#9db3d6 6.5px)"></div>
</body></html>
